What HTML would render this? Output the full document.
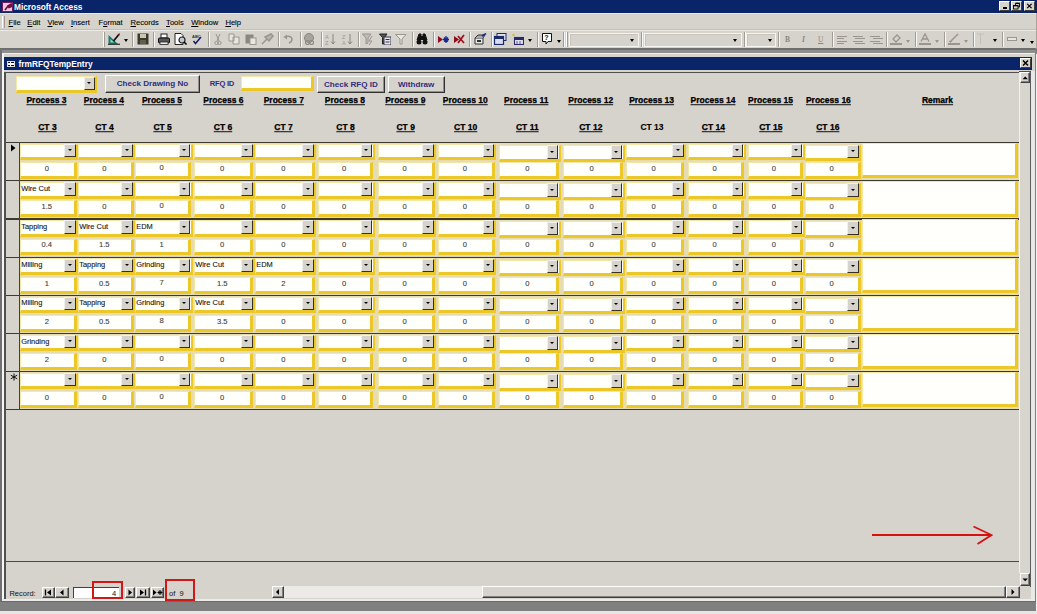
<!DOCTYPE html><html><head><meta charset="utf-8"><style>
*{margin:0;padding:0;box-sizing:border-box}
html,body{width:1037px;height:614px;overflow:hidden;background:#D6D3CD;position:relative;font-family:"Liberation Sans",sans-serif}
body div{position:absolute}
.t{white-space:nowrap;line-height:1}
.rg{-webkit-text-stroke:0.1px currentColor}
.btn{background:#D6D3CD;border-top:1px solid #fff;border-left:1px solid #fff;border-right:1px solid #404040;border-bottom:1px solid #404040;box-shadow:inset -1px -1px 0 #808080}
.sep{width:2px;border-left:1px solid #808080;border-right:1px solid #fff}
.hd{font-weight:bold;font-size:8.5px;color:#000;text-decoration:underline;text-decoration-color:#3a3a3a;text-shadow:0 1px 0 rgba(90,90,90,.35);-webkit-text-stroke:0.12px #000}
.cb{background:#fffffc;border-top:1px solid #f4e7a8;border-left:1px solid #f4e7a8;border-right:3px solid #EBC828;border-bottom:3.4px solid #EBC828}
.dd{background:#D6D3CD;border-top:1px solid #f0f0f0;border-left:1px solid #f0f0f0;border-right:1px solid #3a3020;border-bottom:1px solid #3a3020}
.ar{width:0;height:0;border-left:2.5px solid transparent;border-right:2.5px solid transparent;border-top:3px solid #000}
.ct{font-size:7.6px;color:#222}
</style></head><body>
<div style="left:0px;top:0px;width:1037px;height:13px;background:#0A246A"></div>
<div style="left:0px;top:13px;width:1037px;height:1px;background:#e8e8f0"></div>
<div style="left:2px;top:2px;width:11px;height:10px;background:#f4c8e0;border:1px solid #7a1a5a"></div>
<svg style="position:absolute;left:2px;top:2px" width="11" height="10"><path d="M3 8 L6 4 M6 4 L9 2 L9.5 4.5 L7 5.5 Z" stroke="#6a1040" stroke-width="1.6" fill="#8a2060"/></svg>
<div class="t" style="left:14px;top:2.6px;color:#fff;font-weight:bold;font-size:8.3px">Microsoft Access</div>
<div style="left:999px;top:1px;width:11px;height:10px;background:#D6D3CD;border-top:1px solid #fff;border-left:1px solid #fff;border-right:1px solid #404040;border-bottom:1px solid #404040"></div>
<div style="left:1011px;top:1px;width:11px;height:10px;background:#D6D3CD;border-top:1px solid #fff;border-left:1px solid #fff;border-right:1px solid #404040;border-bottom:1px solid #404040"></div>
<div style="left:1024px;top:1px;width:11px;height:10px;background:#D6D3CD;border-top:1px solid #fff;border-left:1px solid #fff;border-right:1px solid #404040;border-bottom:1px solid #404040"></div>
<div style="left:1002.5px;top:7.3px;width:4.5px;height:1.4px;background:#000"></div>
<svg style="position:absolute;left:1011px;top:1px" width="11" height="10"><path d="M4.5 4 V2.5 H8.5 V6 H7" fill="none" stroke="#000" stroke-width="0.9"/><path d="M4.5 2.2 H8.8" stroke="#000" stroke-width="1.2"/><rect x="2.5" y="4.5" width="4.5" height="3.5" fill="none" stroke="#000" stroke-width="0.9"/><path d="M2.2 4.7 H7.2" stroke="#000" stroke-width="1.3"/></svg>
<svg style="position:absolute;left:1024px;top:1px" width="11" height="10"><path d="M3.2 2.8 L7.6 7.2 M7.6 2.8 L3.2 7.2" stroke="#000" stroke-width="1.2"/></svg>
<div style="left:2px;top:15.5px;width:2.5px;height:12.5px;border-left:1px solid #fff;border-right:1.2px solid #a09c94"></div>
<div class="t rg" style="left:8.5px;top:18.6px;font-size:7.6px;color:#000"><u>F</u>ile</div>
<div class="t rg" style="left:27.3px;top:18.6px;font-size:7.6px;color:#000"><u>E</u>dit</div>
<div class="t rg" style="left:47.5px;top:18.6px;font-size:7.6px;color:#000"><u>V</u>iew</div>
<div class="t rg" style="left:70.9px;top:18.6px;font-size:7.6px;color:#000"><u>I</u>nsert</div>
<div class="t rg" style="left:98.5px;top:18.6px;font-size:7.6px;color:#000">F<u>o</u>rmat</div>
<div class="t rg" style="left:130.5px;top:18.6px;font-size:7.6px;color:#000"><u>R</u>ecords</div>
<div class="t rg" style="left:166.1px;top:18.6px;font-size:7.6px;color:#000"><u>T</u>ools</div>
<div class="t rg" style="left:191.2px;top:18.6px;font-size:7.6px;color:#000"><u>W</u>indow</div>
<div class="t rg" style="left:225.4px;top:18.6px;font-size:7.6px;color:#000"><u>H</u>elp</div>
<div style="left:0px;top:28.6px;width:1037px;height:1px;background:#c4c0b8"></div>
<div style="left:0px;top:29.6px;width:1037px;height:1px;background:#ecebe6"></div>
<div style="left:1035.5px;top:13px;width:1.5px;height:35px;background:#a8a49c"></div>
<div style="left:102.5px;top:31.5px;width:2.5px;height:15px;border-left:1px solid #fff;border-right:1.2px solid #a09c94"></div>
<div style="left:132px;top:31.5px;width:2px;height:15px;border-left:1px solid #a09c94;border-right:1px solid #f8f8f8"></div>
<div style="left:153px;top:31.5px;width:2px;height:15px;border-left:1px solid #a09c94;border-right:1px solid #f8f8f8"></div>
<div style="left:208px;top:31.5px;width:2px;height:15px;border-left:1px solid #a09c94;border-right:1px solid #f8f8f8"></div>
<div style="left:278px;top:31.5px;width:2px;height:15px;border-left:1px solid #a09c94;border-right:1px solid #f8f8f8"></div>
<div style="left:300px;top:31.5px;width:2px;height:15px;border-left:1px solid #a09c94;border-right:1px solid #f8f8f8"></div>
<div style="left:320.5px;top:31.5px;width:2px;height:15px;border-left:1px solid #a09c94;border-right:1px solid #f8f8f8"></div>
<div style="left:357.6px;top:31.5px;width:2px;height:15px;border-left:1px solid #a09c94;border-right:1px solid #f8f8f8"></div>
<div style="left:412px;top:31.5px;width:2px;height:15px;border-left:1px solid #a09c94;border-right:1px solid #f8f8f8"></div>
<div style="left:433px;top:31.5px;width:2px;height:15px;border-left:1px solid #a09c94;border-right:1px solid #f8f8f8"></div>
<div style="left:469.4px;top:31.5px;width:2px;height:15px;border-left:1px solid #a09c94;border-right:1px solid #f8f8f8"></div>
<div style="left:490.8px;top:31.5px;width:2px;height:15px;border-left:1px solid #a09c94;border-right:1px solid #f8f8f8"></div>
<div style="left:536.7px;top:31.5px;width:2px;height:15px;border-left:1px solid #a09c94;border-right:1px solid #f8f8f8"></div>
<div style="left:563px;top:31.5px;width:2px;height:15px;border-left:1px solid #a09c94;border-right:1px solid #f8f8f8"></div>
<div style="left:565.5px;top:31.5px;width:2.5px;height:15px;border-left:1px solid #fff;border-right:1.2px solid #a09c94"></div>
<div style="left:641px;top:31.5px;width:2px;height:15px;border-left:1px solid #a09c94;border-right:1px solid #f8f8f8"></div>
<div style="left:743.6px;top:31.5px;width:2px;height:15px;border-left:1px solid #a09c94;border-right:1px solid #f8f8f8"></div>
<div style="left:778px;top:31.5px;width:2px;height:15px;border-left:1px solid #a09c94;border-right:1px solid #f8f8f8"></div>
<div style="left:832px;top:31.5px;width:2px;height:15px;border-left:1px solid #a09c94;border-right:1px solid #f8f8f8"></div>
<div style="left:886px;top:31.5px;width:2px;height:15px;border-left:1px solid #a09c94;border-right:1px solid #f8f8f8"></div>
<div style="left:914.5px;top:31.5px;width:2px;height:15px;border-left:1px solid #a09c94;border-right:1px solid #f8f8f8"></div>
<div style="left:943.6px;top:31.5px;width:2px;height:15px;border-left:1px solid #a09c94;border-right:1px solid #f8f8f8"></div>
<div style="left:972.7px;top:31.5px;width:2px;height:15px;border-left:1px solid #a09c94;border-right:1px solid #f8f8f8"></div>
<div style="left:1001.7px;top:31.5px;width:2px;height:15px;border-left:1px solid #a09c94;border-right:1px solid #f8f8f8"></div>
<div style="left:569px;top:33px;width:70px;height:14px;border:1px solid #f6f4f0;box-shadow:inset 1px 1px 0 #c8c4bc"></div>
<div class="ar" style="left:629.5px;top:39px"></div>
<div style="left:644px;top:33px;width:98px;height:14px;border:1px solid #f6f4f0;box-shadow:inset 1px 1px 0 #c8c4bc"></div>
<div class="ar" style="left:732.5px;top:39px"></div>
<div style="left:746px;top:33px;width:30px;height:14px;border:1px solid #f6f4f0;box-shadow:inset 1px 1px 0 #c8c4bc"></div>
<div class="ar" style="left:767.5px;top:39px"></div>
<svg style="position:absolute;left:108px;top:33px" width="13" height="12" viewBox="0 0 13 12"><path d="M0.5 11 L0.5 2 L10 11 Z" fill="#1a7a6a"/><path d="M2.5 9.5 L2.5 6 L6 9.5Z" fill="#a8d0c0"/><path d="M0 11.3 H12" stroke="#303838" stroke-width="1.3"/><path d="M5.5 8 L10.5 2" stroke="#101010" stroke-width="1.8"/><path d="M9.5 1.5 L11.5 0 L11.8 2.5Z" fill="#5a1010"/></svg>
<div class="ar" style="left:124px;top:39px"></div>
<svg style="position:absolute;left:137px;top:33px" width="12" height="12" viewBox="0 0 12 12"><rect x="0.5" y="0.5" width="11" height="11" fill="#3a3a28"/><rect x="3" y="1" width="6" height="4" fill="#c8c8b0"/><rect x="3" y="7" width="6" height="4" fill="#606050"/></svg>
<svg style="position:absolute;left:158px;top:33px" width="12" height="12" viewBox="0 0 12 12"><rect x="3" y="1" width="6" height="4" fill="#fff" stroke="#222"/><rect x="0.5" y="5" width="11" height="5" rx="1" fill="#555" stroke="#111"/><rect x="2" y="9" width="8" height="2.5" fill="#eee" stroke="#222" stroke-width=".8"/></svg>
<svg style="position:absolute;left:174px;top:33px" width="13" height="12" viewBox="0 0 13 12"><path d="M1 0.5 H7 L9 2.5 V11.5 H1Z" fill="#fff" stroke="#222"/><circle cx="8" cy="7" r="3" fill="#c0c8d0" stroke="#222" stroke-width="1.2"/><path d="M10 9 L12.5 11.5" stroke="#111" stroke-width="1.6"/></svg>
<svg style="position:absolute;left:191px;top:33px" width="12" height="12" viewBox="0 0 12 12"><text x="1" y="4.5" font-size="4" font-family="Liberation Sans" font-weight="bold" fill="#1a3a1a">ABC</text><path d="M2.5 8 L4.5 10.5 L10 4" stroke="#1a1a6a" stroke-width="1.5" fill="none"/></svg>
<svg style="position:absolute;left:214px;top:33px" width="8" height="12" viewBox="0 0 8 12"><path d="M2 1 L5 8 M6 1 L3 8" stroke="#9a968e" stroke-width="1"/><circle cx="2.5" cy="10" r="1.6" fill="none" stroke="#9a968e"/><circle cx="5.5" cy="10" r="1.6" fill="none" stroke="#9a968e"/></svg>
<svg style="position:absolute;left:228px;top:33px" width="13" height="12" viewBox="0 0 13 12"><path d="M1 1 H6 V8 H1Z M5 4 H11 V11 H5Z" fill="#e8e6e0" stroke="#9a968e"/></svg>
<svg style="position:absolute;left:245px;top:33px" width="12" height="12" viewBox="0 0 12 12"><rect x="0.5" y="1.5" width="8" height="9" fill="#8a8680"/><rect x="5" y="5" width="6" height="6.5" fill="#e8e6e0" stroke="#9a968e"/></svg>
<svg style="position:absolute;left:261px;top:33px" width="13" height="12" viewBox="0 0 13 12"><path d="M1 11 L6 6 M4 4 L10 1 L12 3 L8 8Z" stroke="#9a968e" stroke-width="1.5" fill="#b8b4ac"/></svg>
<svg style="position:absolute;left:283px;top:33px" width="11" height="12" viewBox="0 0 11 12"><path d="M2 4 Q8 2 9 6 Q9 9 6 10" stroke="#9a968e" stroke-width="1.5" fill="none"/><path d="M0.5 4 L4 1.5 L4 6.5Z" fill="#9a968e"/></svg>
<svg style="position:absolute;left:303px;top:33px" width="13" height="12" viewBox="0 0 13 12"><circle cx="6" cy="5" r="4.5" fill="#a8a49c" stroke="#8a8680"/><circle cx="4.5" cy="9.5" r="2" fill="none" stroke="#8a8680" stroke-width="1.2"/><circle cx="8.5" cy="9.5" r="2" fill="none" stroke="#8a8680" stroke-width="1.2"/></svg>
<svg style="position:absolute;left:325px;top:33px" width="11" height="12" viewBox="0 0 11 12"><text x="0" y="5.5" font-size="5.5" font-family="Liberation Sans" fill="#9a968e">A</text><text x="0" y="11.5" font-size="5.5" font-family="Liberation Sans" fill="#9a968e">Z</text><path d="M8 1 V11 M6 8.5 L8 11 L10 8.5" stroke="#8a8680" stroke-width="1" fill="none"/></svg>
<svg style="position:absolute;left:342px;top:33px" width="11" height="12" viewBox="0 0 11 12"><text x="0" y="5.5" font-size="5.5" font-family="Liberation Sans" fill="#9a968e">Z</text><text x="0" y="11.5" font-size="5.5" font-family="Liberation Sans" fill="#9a968e">A</text><path d="M8 1 V11 M6 8.5 L8 11 L10 8.5" stroke="#8a8680" stroke-width="1" fill="none"/></svg>
<svg style="position:absolute;left:362px;top:33px" width="12" height="12" viewBox="0 0 12 12"><path d="M0.5 1 H9 L6 5 V10 L4 11 V5Z" fill="#c0bcb4" stroke="#9a968e"/><path d="M10 3 L7 8 L10 8 L7 12" stroke="#9a968e" fill="none"/></svg>
<svg style="position:absolute;left:379px;top:33px" width="12" height="12" viewBox="0 0 12 12"><path d="M0.5 1 H8 L5.5 4.5 V10 L3.5 11 V4.5Z" fill="#555" stroke="#222"/><rect x="5" y="4" width="7" height="8" fill="#e8e8e8" stroke="#303050"/><path d="M6.5 6.5 H10.5 M6.5 9 H10.5" stroke="#303050"/></svg>
<svg style="position:absolute;left:395px;top:33px" width="12" height="12" viewBox="0 0 12 12"><path d="M0.5 1.5 H11 L7 6 V11 L5 11 V6Z" fill="#e8e6e0" stroke="#9a968e"/></svg>
<svg style="position:absolute;left:416px;top:33px" width="12" height="12" viewBox="0 0 12 12"><path d="M1 7 L3 1 H5 V7 M11 7 L9 1 H7 V7" fill="#111" stroke="#111"/><circle cx="3" cy="9" r="2.5" fill="#111"/><circle cx="9" cy="9" r="2.5" fill="#111"/><rect x="5" y="3" width="2" height="4" fill="#111"/></svg>
<svg style="position:absolute;left:437px;top:33px" width="12" height="12" viewBox="0 0 12 12"><path d="M1 3 L6 6.5 L1 10Z" fill="#8a1020"/><path d="M9 3 V10 M6 6.5 H12 M7 4.5 L11 8.5 M11 4.5 L7 8.5" stroke="#1a2a8a" stroke-width="1.3"/></svg>
<svg style="position:absolute;left:453px;top:33px" width="12" height="12" viewBox="0 0 12 12"><path d="M1 3 L6 6.5 L1 10Z" fill="#8a1020"/><path d="M5 3 L11 10 M11 2 L5 10" stroke="#a01020" stroke-width="1.8"/></svg>
<svg style="position:absolute;left:474px;top:33px" width="13" height="12" viewBox="0 0 13 12"><path d="M1 5 H9 V11 H1Z" fill="#e8e8e8" stroke="#333"/><path d="M1 5 L4 2 H11 L9 5" fill="#aaa" stroke="#333"/><path d="M8 3 L12 0.5" stroke="#1a2a8a" stroke-width="1.5"/><rect x="3" y="7" width="4" height="2" fill="#333"/></svg>
<svg style="position:absolute;left:494px;top:33px" width="13" height="12" viewBox="0 0 13 12"><rect x="3" y="0.5" width="9" height="7" fill="#e0e4f0" stroke="#1a2a6a"/><rect x="0.5" y="3.5" width="9" height="8" fill="#d8dcec" stroke="#1a2a6a" stroke-width="1.2"/><rect x="1" y="4" width="8" height="2" fill="#1a2a6a"/></svg>
<svg style="position:absolute;left:511px;top:33px" width="13" height="12" viewBox="0 0 13 12"><path d="M2 1 L3 3 M1 2 H4" stroke="#d0c020"/><rect x="3.5" y="4.5" width="9" height="7" fill="#e0e0f0" stroke="#2a2a6a" stroke-width="1.1"/><rect x="4" y="5" width="8" height="2" fill="#2a2a6a"/><path d="M6 8 V11 M9 8 V11" stroke="#2a2a6a" stroke-width=".7"/></svg>
<div class="ar" style="left:527.5px;top:39px"></div>
<svg style="position:absolute;left:542px;top:33px" width="10" height="12" viewBox="0 0 10 12"><path d="M0.5 0.5 H9.5 V8.5 H6 L4 11 L4 8.5 H0.5Z" fill="#fff" stroke="#111"/><text x="2.3" y="7.3" font-size="7" font-weight="bold" font-family="Liberation Sans" fill="#111">?</text></svg>
<div class="ar" style="left:556.5px;top:40px"></div>
<div class="t" style="left:785px;top:35.5px;font-family:'Liberation Serif';font-weight:bold;font-size:7.5px;color:#8a8680">B</div>
<div class="t" style="left:802px;top:35.5px;font-family:'Liberation Serif';font-style:italic;font-weight:bold;font-size:7.5px;color:#8a8680">I</div>
<div class="t" style="left:818px;top:35.5px;font-family:'Liberation Serif';font-size:7.5px;color:#8a8680"><u>U</u></div>
<div style="left:837px;top:35.5px;width:10px;height:1px;background:#9a968e"></div>
<div style="left:837px;top:38px;width:7px;height:1px;background:#9a968e"></div>
<div style="left:837px;top:40.5px;width:10px;height:1px;background:#9a968e"></div>
<div style="left:837px;top:43px;width:7px;height:1px;background:#9a968e"></div>
<div style="left:853px;top:35.5px;width:10px;height:1px;background:#9a968e"></div>
<div style="left:854.5px;top:38px;width:10px;height:1px;background:#9a968e"></div>
<div style="left:853px;top:40.5px;width:10px;height:1px;background:#9a968e"></div>
<div style="left:854.5px;top:43px;width:10px;height:1px;background:#9a968e"></div>
<div style="left:870px;top:35.5px;width:10px;height:1px;background:#9a968e"></div>
<div style="left:873px;top:38px;width:10px;height:1px;background:#9a968e"></div>
<div style="left:870px;top:40.5px;width:10px;height:1px;background:#9a968e"></div>
<div style="left:873px;top:43px;width:10px;height:1px;background:#9a968e"></div>
<svg style="position:absolute;left:890px;top:33px" width="12" height="12" viewBox="0 0 12 12"><path d="M3 6 L7 2 L10 5 L6 9Z" fill="none" stroke="#9a968e" stroke-width="1.3"/><rect x="0" y="10" width="12" height="2" fill="#9a968e"/></svg>
<div class="ar" style="left:905.5px;top:40px;border-top-color:#9a968e"></div>
<svg style="position:absolute;left:919px;top:33px" width="12" height="12" viewBox="0 0 12 12"><path d="M2 8.5 L6 1 L10 8.5 M3.5 6 H8.5" stroke="#9a968e" stroke-width="1.3" fill="none"/><rect x="0" y="10" width="12" height="2" fill="#9a968e"/></svg>
<div class="ar" style="left:935px;top:40px;border-top-color:#9a968e"></div>
<svg style="position:absolute;left:948px;top:33px" width="12" height="12" viewBox="0 0 12 12"><path d="M2 9 L10 1" stroke="#9a968e" stroke-width="1.5"/><path d="M1 8 Q2 10 4 8" stroke="#9a968e" fill="none"/><rect x="0" y="10" width="12" height="2" fill="#9a968e"/></svg>
<div class="ar" style="left:963.5px;top:40px;border-top-color:#9a968e"></div>
<svg style="position:absolute;left:976px;top:33px" width="9" height="12" viewBox="0 0 9 12"><path d="M1 1 H8 M4.5 1 V11" stroke="#c4c0b8" stroke-width="1"/></svg>
<div class="ar" style="left:992.5px;top:39px"></div>
<div style="left:1007px;top:37px;width:10px;height:4px;border:1px solid #9a968e;background:#e8e6e0"></div>
<div class="ar" style="left:1021px;top:39px"></div>
<div class="ar" style="left:1029.5px;top:41px"></div>
<div style="left:0px;top:48px;width:1037px;height:2px;background:#6e6e6e"></div>
<div style="left:0px;top:50px;width:1037px;height:4px;background:#8e8e8e"></div>
<div style="left:0px;top:48px;width:2px;height:566px;background:#707070"></div>
<div style="left:1035px;top:48px;width:2px;height:566px;background:#808080"></div>
<div style="left:1036px;top:54px;width:1px;height:560px;background:#f0f0f0"></div>
<div style="left:0px;top:601px;width:1036px;height:10px;background:#808080"></div>
<div style="left:0px;top:601px;width:1036px;height:1.2px;background:#6a6a6a"></div>
<div style="left:0px;top:611px;width:1037px;height:3px;background:#e8e6e2"></div>
<div style="left:2px;top:53.2px;width:1033px;height:547.8px;background:#D6D3CD;border-top:1px solid #f0f0f0;border-left:1px solid #f0f0f0"></div>
<div style="left:4.3px;top:57px;width:1028px;height:13px;background:#0A246A"></div>
<div style="left:7px;top:60.5px;width:8px;height:6.5px;background:#fff;border:1px solid #dcdcdc"></div>
<div style="left:8px;top:62px;width:2px;height:1px;background:#111"></div>
<div style="left:11px;top:62px;width:3px;height:1px;background:#111"></div>
<div style="left:8px;top:64.5px;width:2px;height:1px;background:#111"></div>
<div style="left:11px;top:64.5px;width:3px;height:1px;background:#111"></div>
<div class="t" style="left:18.5px;top:59.6px;color:#fff;font-weight:bold;font-size:8.35px">frmRFQTempEntry</div>
<div style="left:1019.7px;top:57.7px;width:11px;height:10px;background:#D6D3CD;border-top:1px solid #fff;border-left:1px solid #fff;border-right:1px solid #404040;border-bottom:1px solid #404040"></div>
<svg style="position:absolute;left:1019.7px;top:57.7px" width="11" height="10"><path d="M3 2.5 L8 7.5 M8 2.5 L3 7.5" stroke="#000" stroke-width="1.5"/></svg>
<div style="left:4px;top:71.5px;width:1027.5px;height:528px;border-top:1px solid #505050;border-left:2px solid #505050;border-right:1px solid #6a6a6a"></div>
<div style="left:1031.3px;top:71px;width:3.4px;height:530px;background:#e8e8e6"></div>
<div style="left:1034.7px;top:54px;width:1.3px;height:547px;background:#808080"></div>
<div style="left:2.4px;top:54px;width:1.5px;height:547px;background:#f6f6f6"></div>
<div style="left:2px;top:598.5px;width:1033px;height:2px;background:#ecebe7"></div>
<div class="cb" style="left:16.3px;top:76.3px;width:81px;height:16.4px;border-right-width:2.3px"></div>
<div class="dd" style="left:84.0px;top:76.5px;width:11px;height:13.2px;"></div>
<div class="ar" style="left:87.1px;top:81.8px;border-left-width:2px;border-right-width:2px;border-top-width:2.5px"></div>
<div style="left:105px;top:75.3px;width:95px;height:17.3px;background:#D6D3CD;border-top:1px solid #fff;border-left:1px solid #fff;border-right:1.5px solid #303030;border-bottom:1.5px solid #303030;box-shadow:inset -1px -1px 0 #909090"></div>
<div class="t" style="left:105px;top:79.89999999999999px;width:95px;text-align:center;font-size:8.1px;font-weight:bold;color:#2e2e7c">Check Drawing No</div>
<div class="t" style="left:209.8px;top:80.3px;font-size:7.6px;letter-spacing:-0.25px;font-weight:bold;color:#2e2e7c">RFQ ID</div>
<div class="cb" style="left:241.4px;top:76.4px;width:72.5px;height:15px;"></div>
<div style="left:317.2px;top:76.3px;width:67.5px;height:17px;background:#D6D3CD;border-top:1px solid #fff;border-left:1px solid #fff;border-right:1.5px solid #303030;border-bottom:1.5px solid #303030;box-shadow:inset -1px -1px 0 #909090"></div>
<div class="t" style="left:317.2px;top:80.89999999999999px;width:67.5px;text-align:center;font-size:8.1px;font-weight:bold;color:#2e2e7c">Check RFQ ID</div>
<div style="left:387.6px;top:76.3px;width:57.2px;height:17px;background:#D6D3CD;border-top:1px solid #fff;border-left:1px solid #fff;border-right:1.5px solid #303030;border-bottom:1.5px solid #303030;box-shadow:inset -1px -1px 0 #909090"></div>
<div class="t" style="left:387.6px;top:80.89999999999999px;width:57.2px;text-align:center;font-size:8.1px;font-weight:bold;color:#2e2e7c">Withdraw</div>
<div class="t hd" style="left:-13.5px;top:96.4px;width:120px;text-align:center;">Process 3</div>
<div class="t hd" style="left:43.900000000000006px;top:96.4px;width:120px;text-align:center;">Process 4</div>
<div class="t hd" style="left:102px;top:96.4px;width:120px;text-align:center;">Process 5</div>
<div class="t hd" style="left:163.4px;top:96.4px;width:120px;text-align:center;">Process 6</div>
<div class="t hd" style="left:223.8px;top:96.4px;width:120px;text-align:center;">Process 7</div>
<div class="t hd" style="left:284.9px;top:96.4px;width:120px;text-align:center;">Process 8</div>
<div class="t hd" style="left:345.3px;top:96.4px;width:120px;text-align:center;">Process 9</div>
<div class="t hd" style="left:405.3px;top:96.4px;width:120px;text-align:center;">Process 10</div>
<div class="t hd" style="left:466.20000000000005px;top:96.4px;width:120px;text-align:center;">Process 11</div>
<div class="t hd" style="left:530.7px;top:96.4px;width:120px;text-align:center;">Process 12</div>
<div class="t hd" style="left:591.6px;top:96.4px;width:120px;text-align:center;">Process 13</div>
<div class="t hd" style="left:653px;top:96.4px;width:120px;text-align:center;">Process 14</div>
<div class="t hd" style="left:710.5px;top:95.6px;width:120px;text-align:center;">Process 15</div>
<div class="t hd" style="left:768.4px;top:96.4px;width:120px;text-align:center;">Process 16</div>
<div class="t hd" style="left:877.5px;top:96.4px;width:120px;text-align:center;">Remark</div>
<div class="t hd" style="left:-12.600000000000001px;top:123.3px;width:120px;text-align:center;">CT 3</div>
<div class="t hd" style="left:44.5px;top:123.3px;width:120px;text-align:center;">CT 4</div>
<div class="t hd" style="left:102.6px;top:123.3px;width:120px;text-align:center;">CT 5</div>
<div class="t hd" style="left:163px;top:123.3px;width:120px;text-align:center;">CT 6</div>
<div class="t hd" style="left:223.5px;top:123.3px;width:120px;text-align:center;">CT 7</div>
<div class="t hd" style="left:285.5px;top:123.3px;width:120px;text-align:center;">CT 8</div>
<div class="t hd" style="left:345.7px;top:123.3px;width:120px;text-align:center;">CT 9</div>
<div class="t hd" style="left:405.7px;top:123.3px;width:120px;text-align:center;">CT 10</div>
<div class="t hd" style="left:467.29999999999995px;top:123.3px;width:120px;text-align:center;">CT 11</div>
<div class="t hd" style="left:530.8px;top:123.3px;width:120px;text-align:center;">CT 12</div>
<div class="t" style="left:592px;top:123.3px;width:120px;text-align:center;font-weight:bold;font-size:8.5px;color:#000;-webkit-text-stroke:0.12px #000">CT 13</div>
<div class="t hd" style="left:653.4px;top:123.3px;width:120px;text-align:center;">CT 14</div>
<div class="t hd" style="left:710.8px;top:123.3px;width:120px;text-align:center;">CT 15</div>
<div class="t hd" style="left:767.8px;top:123.3px;width:120px;text-align:center;">CT 16</div>
<div style="left:6px;top:142.0px;width:1014px;height:1.2px;background:#3e3a30"></div>
<div style="left:20px;top:143.2px;width:999px;height:36.8px;background:#e6dcb4"></div>
<div class="cb" style="left:20px;top:143.8px;width:58px;height:16.6px;border-right-width:2.3px"></div>
<div class="dd" style="left:64.10000000000001px;top:144.0px;width:11.6px;height:13.400000000000002px;"></div>
<div class="ar" style="left:67.5px;top:149.40000000000003px;border-left-width:2px;border-right-width:2px;border-top-width:2.5px"></div>
<div class="cb" style="left:20px;top:162.2px;width:56.5px;height:16.8px;"></div>
<div class="t rg" style="left:20px;top:166.2px;width:53.5px;text-align:center;font-size:7.6px;color:#3c3c3c;top:165.0px">0</div>
<div class="cb" style="left:78px;top:143.8px;width:57px;height:16.6px;border-right-width:2.3px"></div>
<div class="dd" style="left:121.1px;top:144.0px;width:11.6px;height:13.400000000000002px;"></div>
<div class="ar" style="left:124.49999999999999px;top:149.40000000000003px;border-left-width:2px;border-right-width:2px;border-top-width:2.5px"></div>
<div class="cb" style="left:78px;top:162.2px;width:55.5px;height:16.8px;"></div>
<div class="t rg" style="left:78px;top:166.2px;width:52.5px;text-align:center;font-size:7.6px;color:#3c3c3c;top:165.0px">0</div>
<div class="cb" style="left:135px;top:143.8px;width:57.69999999999999px;height:16.6px;border-right-width:2.3px"></div>
<div class="dd" style="left:178.79999999999998px;top:144.0px;width:11.6px;height:13.400000000000002px;"></div>
<div class="ar" style="left:182.2px;top:149.40000000000003px;border-left-width:2px;border-right-width:2px;border-top-width:2.5px"></div>
<div class="cb" style="left:135px;top:162.2px;width:56.19999999999999px;height:16.8px;"></div>
<div class="t rg" style="left:135px;top:166.2px;width:53.19999999999999px;text-align:center;font-size:7.6px;color:#3c3c3c;top:164.2px">0</div>
<div class="cb" style="left:194px;top:143.8px;width:60.900000000000006px;height:16.6px;border-right-width:2.3px"></div>
<div class="dd" style="left:241.0px;top:144.0px;width:11.6px;height:13.400000000000002px;"></div>
<div class="ar" style="left:244.4px;top:149.40000000000003px;border-left-width:2px;border-right-width:2px;border-top-width:2.5px"></div>
<div class="cb" style="left:194px;top:162.2px;width:59.400000000000006px;height:16.8px;"></div>
<div class="t rg" style="left:194px;top:166.2px;width:56.400000000000006px;text-align:center;font-size:7.6px;color:#3c3c3c;top:165.0px">0</div>
<div class="cb" style="left:255px;top:143.8px;width:61.19999999999999px;height:16.6px;border-right-width:2.3px"></div>
<div class="dd" style="left:302.29999999999995px;top:144.0px;width:11.6px;height:13.400000000000002px;"></div>
<div class="ar" style="left:305.7px;top:149.40000000000003px;border-left-width:2px;border-right-width:2px;border-top-width:2.5px"></div>
<div class="cb" style="left:255px;top:162.2px;width:59.69999999999999px;height:16.8px;"></div>
<div class="t rg" style="left:255px;top:166.2px;width:56.69999999999999px;text-align:center;font-size:7.6px;color:#3c3c3c;top:165.0px">0</div>
<div class="cb" style="left:318px;top:143.8px;width:56.5px;height:16.6px;border-right-width:2.3px"></div>
<div class="dd" style="left:360.59999999999997px;top:144.0px;width:11.6px;height:13.400000000000002px;"></div>
<div class="ar" style="left:364.0px;top:149.40000000000003px;border-left-width:2px;border-right-width:2px;border-top-width:2.5px"></div>
<div class="cb" style="left:318px;top:162.2px;width:55.0px;height:16.8px;"></div>
<div class="t rg" style="left:318px;top:166.2px;width:52.0px;text-align:center;font-size:7.6px;color:#3c3c3c;top:165.0px">0</div>
<div class="cb" style="left:377.5px;top:143.8px;width:58.5px;height:16.6px;border-right-width:2.3px"></div>
<div class="dd" style="left:422.09999999999997px;top:144.0px;width:11.6px;height:13.400000000000002px;"></div>
<div class="ar" style="left:425.5px;top:149.40000000000003px;border-left-width:2px;border-right-width:2px;border-top-width:2.5px"></div>
<div class="cb" style="left:377.5px;top:162.2px;width:57.0px;height:16.8px;"></div>
<div class="t rg" style="left:377.5px;top:166.2px;width:54.0px;text-align:center;font-size:7.6px;color:#3c3c3c;top:165.0px">0</div>
<div class="cb" style="left:437.7px;top:143.8px;width:58.80000000000001px;height:16.6px;border-right-width:2.3px"></div>
<div class="dd" style="left:482.59999999999997px;top:144.0px;width:11.6px;height:13.400000000000002px;"></div>
<div class="ar" style="left:486.0px;top:149.40000000000003px;border-left-width:2px;border-right-width:2px;border-top-width:2.5px"></div>
<div class="cb" style="left:437.7px;top:162.2px;width:57.30000000000001px;height:16.8px;"></div>
<div class="t rg" style="left:437.7px;top:166.2px;width:54.30000000000001px;text-align:center;font-size:7.6px;color:#3c3c3c;top:165.0px">0</div>
<div class="cb" style="left:498.5px;top:145.10000000000002px;width:62.0px;height:16.6px;border-right-width:2.3px"></div>
<div class="dd" style="left:546.6px;top:145.3px;width:11.6px;height:13.400000000000002px;"></div>
<div class="ar" style="left:550.0px;top:150.70000000000005px;border-left-width:2px;border-right-width:2px;border-top-width:2.5px"></div>
<div class="cb" style="left:498.5px;top:162.2px;width:60.5px;height:16.8px;"></div>
<div class="t rg" style="left:498.5px;top:166.2px;width:57.5px;text-align:center;font-size:7.6px;color:#3c3c3c;top:165.0px">0</div>
<div class="cb" style="left:563px;top:145.10000000000002px;width:61.5px;height:16.6px;border-right-width:2.3px"></div>
<div class="dd" style="left:610.6px;top:145.3px;width:11.6px;height:13.400000000000002px;"></div>
<div class="ar" style="left:614.0px;top:150.70000000000005px;border-left-width:2px;border-right-width:2px;border-top-width:2.5px"></div>
<div class="cb" style="left:563px;top:162.2px;width:60.0px;height:16.8px;"></div>
<div class="t rg" style="left:563px;top:166.2px;width:57.0px;text-align:center;font-size:7.6px;color:#3c3c3c;top:165.0px">0</div>
<div class="cb" style="left:625.8px;top:143.8px;width:60.200000000000045px;height:16.6px;border-right-width:2.3px"></div>
<div class="dd" style="left:672.1px;top:144.0px;width:11.6px;height:13.400000000000002px;"></div>
<div class="ar" style="left:675.5px;top:149.40000000000003px;border-left-width:2px;border-right-width:2px;border-top-width:2.5px"></div>
<div class="cb" style="left:625.8px;top:162.2px;width:58.700000000000045px;height:16.8px;"></div>
<div class="t rg" style="left:625.8px;top:166.2px;width:55.700000000000045px;text-align:center;font-size:7.6px;color:#3c3c3c;top:165.0px">0</div>
<div class="cb" style="left:688px;top:143.8px;width:57.5px;height:16.6px;border-right-width:2.3px"></div>
<div class="dd" style="left:731.6px;top:144.0px;width:11.6px;height:13.400000000000002px;"></div>
<div class="ar" style="left:735.0px;top:149.40000000000003px;border-left-width:2px;border-right-width:2px;border-top-width:2.5px"></div>
<div class="cb" style="left:688px;top:162.2px;width:56.0px;height:16.8px;"></div>
<div class="t rg" style="left:688px;top:166.2px;width:53.0px;text-align:center;font-size:7.6px;color:#3c3c3c;top:165.0px">0</div>
<div class="cb" style="left:747.5px;top:143.8px;width:57.0px;height:16.6px;border-right-width:2.3px"></div>
<div class="dd" style="left:790.6px;top:144.0px;width:11.6px;height:13.400000000000002px;"></div>
<div class="ar" style="left:794.0px;top:149.40000000000003px;border-left-width:2px;border-right-width:2px;border-top-width:2.5px"></div>
<div class="cb" style="left:747.5px;top:162.2px;width:55.5px;height:16.8px;"></div>
<div class="t rg" style="left:747.5px;top:166.2px;width:52.5px;text-align:center;font-size:7.6px;color:#3c3c3c;top:165.0px">0</div>
<div class="cb" style="left:805.3px;top:144.8px;width:55.700000000000045px;height:16.6px;border-right-width:2.3px"></div>
<div class="dd" style="left:847.1px;top:145.0px;width:11.6px;height:13.400000000000002px;"></div>
<div class="ar" style="left:850.5px;top:150.40000000000003px;border-left-width:2px;border-right-width:2px;border-top-width:2.5px"></div>
<div class="cb" style="left:805.3px;top:162.2px;width:55.700000000000045px;height:16.8px;"></div>
<div class="t rg" style="left:805.3px;top:166.2px;width:52.700000000000045px;text-align:center;font-size:7.6px;color:#3c3c3c;top:165.0px">0</div>
<div class="cb" style="left:861.8px;top:143.1px;width:156.2px;height:35.3px;"></div>
<div style="left:6px;top:180.18px;width:1014px;height:1.2px;background:#3e3a30"></div>
<div style="left:20px;top:181.38px;width:999px;height:36.8px;background:#e6dcb4"></div>
<div class="cb" style="left:20px;top:181.98000000000002px;width:58px;height:16.6px;border-right-width:2.3px"></div>
<div class="dd" style="left:64.10000000000001px;top:182.18px;width:11.6px;height:13.400000000000002px;"></div>
<div class="ar" style="left:67.5px;top:187.58000000000004px;border-left-width:2px;border-right-width:2px;border-top-width:2.5px"></div>
<div class="t rg" style="left:21.2px;top:184.88000000000002px;font-size:7.45px;color:#111;">Wire Cut</div>
<div class="cb" style="left:20px;top:200.38px;width:56.5px;height:16.8px;"></div>
<div class="t rg" style="left:20px;top:204.38px;width:53.5px;text-align:center;font-size:7.6px;color:#3c3c3c;top:203.18px">1.5</div>
<div class="cb" style="left:78px;top:181.98000000000002px;width:57px;height:16.6px;border-right-width:2.3px"></div>
<div class="dd" style="left:121.1px;top:182.18px;width:11.6px;height:13.400000000000002px;"></div>
<div class="ar" style="left:124.49999999999999px;top:187.58000000000004px;border-left-width:2px;border-right-width:2px;border-top-width:2.5px"></div>
<div class="cb" style="left:78px;top:200.38px;width:55.5px;height:16.8px;"></div>
<div class="t rg" style="left:78px;top:204.38px;width:52.5px;text-align:center;font-size:7.6px;color:#3c3c3c;top:203.18px">0</div>
<div class="cb" style="left:135px;top:181.98000000000002px;width:57.69999999999999px;height:16.6px;border-right-width:2.3px"></div>
<div class="dd" style="left:178.79999999999998px;top:182.18px;width:11.6px;height:13.400000000000002px;"></div>
<div class="ar" style="left:182.2px;top:187.58000000000004px;border-left-width:2px;border-right-width:2px;border-top-width:2.5px"></div>
<div class="cb" style="left:135px;top:200.38px;width:56.19999999999999px;height:16.8px;"></div>
<div class="t rg" style="left:135px;top:204.38px;width:53.19999999999999px;text-align:center;font-size:7.6px;color:#3c3c3c;top:202.38px">0</div>
<div class="cb" style="left:194px;top:181.98000000000002px;width:60.900000000000006px;height:16.6px;border-right-width:2.3px"></div>
<div class="dd" style="left:241.0px;top:182.18px;width:11.6px;height:13.400000000000002px;"></div>
<div class="ar" style="left:244.4px;top:187.58000000000004px;border-left-width:2px;border-right-width:2px;border-top-width:2.5px"></div>
<div class="cb" style="left:194px;top:200.38px;width:59.400000000000006px;height:16.8px;"></div>
<div class="t rg" style="left:194px;top:204.38px;width:56.400000000000006px;text-align:center;font-size:7.6px;color:#3c3c3c;top:203.18px">0</div>
<div class="cb" style="left:255px;top:181.98000000000002px;width:61.19999999999999px;height:16.6px;border-right-width:2.3px"></div>
<div class="dd" style="left:302.29999999999995px;top:182.18px;width:11.6px;height:13.400000000000002px;"></div>
<div class="ar" style="left:305.7px;top:187.58000000000004px;border-left-width:2px;border-right-width:2px;border-top-width:2.5px"></div>
<div class="cb" style="left:255px;top:200.38px;width:59.69999999999999px;height:16.8px;"></div>
<div class="t rg" style="left:255px;top:204.38px;width:56.69999999999999px;text-align:center;font-size:7.6px;color:#3c3c3c;top:203.18px">0</div>
<div class="cb" style="left:318px;top:181.98000000000002px;width:56.5px;height:16.6px;border-right-width:2.3px"></div>
<div class="dd" style="left:360.59999999999997px;top:182.18px;width:11.6px;height:13.400000000000002px;"></div>
<div class="ar" style="left:364.0px;top:187.58000000000004px;border-left-width:2px;border-right-width:2px;border-top-width:2.5px"></div>
<div class="cb" style="left:318px;top:200.38px;width:55.0px;height:16.8px;"></div>
<div class="t rg" style="left:318px;top:204.38px;width:52.0px;text-align:center;font-size:7.6px;color:#3c3c3c;top:203.18px">0</div>
<div class="cb" style="left:377.5px;top:181.98000000000002px;width:58.5px;height:16.6px;border-right-width:2.3px"></div>
<div class="dd" style="left:422.09999999999997px;top:182.18px;width:11.6px;height:13.400000000000002px;"></div>
<div class="ar" style="left:425.5px;top:187.58000000000004px;border-left-width:2px;border-right-width:2px;border-top-width:2.5px"></div>
<div class="cb" style="left:377.5px;top:200.38px;width:57.0px;height:16.8px;"></div>
<div class="t rg" style="left:377.5px;top:204.38px;width:54.0px;text-align:center;font-size:7.6px;color:#3c3c3c;top:203.18px">0</div>
<div class="cb" style="left:437.7px;top:181.98000000000002px;width:58.80000000000001px;height:16.6px;border-right-width:2.3px"></div>
<div class="dd" style="left:482.59999999999997px;top:182.18px;width:11.6px;height:13.400000000000002px;"></div>
<div class="ar" style="left:486.0px;top:187.58000000000004px;border-left-width:2px;border-right-width:2px;border-top-width:2.5px"></div>
<div class="cb" style="left:437.7px;top:200.38px;width:57.30000000000001px;height:16.8px;"></div>
<div class="t rg" style="left:437.7px;top:204.38px;width:54.30000000000001px;text-align:center;font-size:7.6px;color:#3c3c3c;top:203.18px">0</div>
<div class="cb" style="left:498.5px;top:183.28000000000003px;width:62.0px;height:16.6px;border-right-width:2.3px"></div>
<div class="dd" style="left:546.6px;top:183.48000000000002px;width:11.6px;height:13.400000000000002px;"></div>
<div class="ar" style="left:550.0px;top:188.88000000000005px;border-left-width:2px;border-right-width:2px;border-top-width:2.5px"></div>
<div class="cb" style="left:498.5px;top:200.38px;width:60.5px;height:16.8px;"></div>
<div class="t rg" style="left:498.5px;top:204.38px;width:57.5px;text-align:center;font-size:7.6px;color:#3c3c3c;top:203.18px">0</div>
<div class="cb" style="left:563px;top:183.28000000000003px;width:61.5px;height:16.6px;border-right-width:2.3px"></div>
<div class="dd" style="left:610.6px;top:183.48000000000002px;width:11.6px;height:13.400000000000002px;"></div>
<div class="ar" style="left:614.0px;top:188.88000000000005px;border-left-width:2px;border-right-width:2px;border-top-width:2.5px"></div>
<div class="cb" style="left:563px;top:200.38px;width:60.0px;height:16.8px;"></div>
<div class="t rg" style="left:563px;top:204.38px;width:57.0px;text-align:center;font-size:7.6px;color:#3c3c3c;top:203.18px">0</div>
<div class="cb" style="left:625.8px;top:181.98000000000002px;width:60.200000000000045px;height:16.6px;border-right-width:2.3px"></div>
<div class="dd" style="left:672.1px;top:182.18px;width:11.6px;height:13.400000000000002px;"></div>
<div class="ar" style="left:675.5px;top:187.58000000000004px;border-left-width:2px;border-right-width:2px;border-top-width:2.5px"></div>
<div class="cb" style="left:625.8px;top:200.38px;width:58.700000000000045px;height:16.8px;"></div>
<div class="t rg" style="left:625.8px;top:204.38px;width:55.700000000000045px;text-align:center;font-size:7.6px;color:#3c3c3c;top:203.18px">0</div>
<div class="cb" style="left:688px;top:181.98000000000002px;width:57.5px;height:16.6px;border-right-width:2.3px"></div>
<div class="dd" style="left:731.6px;top:182.18px;width:11.6px;height:13.400000000000002px;"></div>
<div class="ar" style="left:735.0px;top:187.58000000000004px;border-left-width:2px;border-right-width:2px;border-top-width:2.5px"></div>
<div class="cb" style="left:688px;top:200.38px;width:56.0px;height:16.8px;"></div>
<div class="t rg" style="left:688px;top:204.38px;width:53.0px;text-align:center;font-size:7.6px;color:#3c3c3c;top:203.18px">0</div>
<div class="cb" style="left:747.5px;top:181.98000000000002px;width:57.0px;height:16.6px;border-right-width:2.3px"></div>
<div class="dd" style="left:790.6px;top:182.18px;width:11.6px;height:13.400000000000002px;"></div>
<div class="ar" style="left:794.0px;top:187.58000000000004px;border-left-width:2px;border-right-width:2px;border-top-width:2.5px"></div>
<div class="cb" style="left:747.5px;top:200.38px;width:55.5px;height:16.8px;"></div>
<div class="t rg" style="left:747.5px;top:204.38px;width:52.5px;text-align:center;font-size:7.6px;color:#3c3c3c;top:203.18px">0</div>
<div class="cb" style="left:805.3px;top:182.98000000000002px;width:55.700000000000045px;height:16.6px;border-right-width:2.3px"></div>
<div class="dd" style="left:847.1px;top:183.18px;width:11.6px;height:13.400000000000002px;"></div>
<div class="ar" style="left:850.5px;top:188.58000000000004px;border-left-width:2px;border-right-width:2px;border-top-width:2.5px"></div>
<div class="cb" style="left:805.3px;top:200.38px;width:55.700000000000045px;height:16.8px;"></div>
<div class="t rg" style="left:805.3px;top:204.38px;width:52.700000000000045px;text-align:center;font-size:7.6px;color:#3c3c3c;top:203.18px">0</div>
<div class="cb" style="left:861.8px;top:181.28px;width:156.2px;height:35.3px;"></div>
<div style="left:6px;top:218.36px;width:1014px;height:1.2px;background:#3e3a30"></div>
<div style="left:20px;top:219.56px;width:999px;height:36.8px;background:#e6dcb4"></div>
<div class="cb" style="left:20px;top:220.16000000000003px;width:58px;height:16.6px;border-right-width:2.3px"></div>
<div class="dd" style="left:64.10000000000001px;top:220.36px;width:11.6px;height:13.400000000000002px;"></div>
<div class="ar" style="left:67.5px;top:225.76000000000005px;border-left-width:2px;border-right-width:2px;border-top-width:2.5px"></div>
<div class="t rg" style="left:21.2px;top:223.06000000000003px;font-size:7.45px;color:#111;">Tapping</div>
<div class="cb" style="left:20px;top:238.56px;width:56.5px;height:16.8px;"></div>
<div class="t rg" style="left:20px;top:242.56px;width:53.5px;text-align:center;font-size:7.6px;color:#3c3c3c;top:241.36px">0.4</div>
<div class="cb" style="left:78px;top:220.16000000000003px;width:57px;height:16.6px;border-right-width:2.3px"></div>
<div class="dd" style="left:121.1px;top:220.36px;width:11.6px;height:13.400000000000002px;"></div>
<div class="ar" style="left:124.49999999999999px;top:225.76000000000005px;border-left-width:2px;border-right-width:2px;border-top-width:2.5px"></div>
<div class="t rg" style="left:79.2px;top:223.06000000000003px;font-size:7.45px;color:#111;">Wire Cut</div>
<div class="cb" style="left:78px;top:238.56px;width:55.5px;height:16.8px;"></div>
<div class="t rg" style="left:78px;top:242.56px;width:52.5px;text-align:center;font-size:7.6px;color:#3c3c3c;top:241.36px">1.5</div>
<div class="cb" style="left:135px;top:220.16000000000003px;width:57.69999999999999px;height:16.6px;border-right-width:2.3px"></div>
<div class="dd" style="left:178.79999999999998px;top:220.36px;width:11.6px;height:13.400000000000002px;"></div>
<div class="ar" style="left:182.2px;top:225.76000000000005px;border-left-width:2px;border-right-width:2px;border-top-width:2.5px"></div>
<div class="t rg" style="left:136.2px;top:223.06000000000003px;font-size:7.45px;color:#111;">EDM</div>
<div class="cb" style="left:135px;top:238.56px;width:56.19999999999999px;height:16.8px;"></div>
<div class="t rg" style="left:135px;top:242.56px;width:53.19999999999999px;text-align:center;font-size:7.6px;color:#3c3c3c;top:240.56px">1</div>
<div class="cb" style="left:194px;top:220.16000000000003px;width:60.900000000000006px;height:16.6px;border-right-width:2.3px"></div>
<div class="dd" style="left:241.0px;top:220.36px;width:11.6px;height:13.400000000000002px;"></div>
<div class="ar" style="left:244.4px;top:225.76000000000005px;border-left-width:2px;border-right-width:2px;border-top-width:2.5px"></div>
<div class="cb" style="left:194px;top:238.56px;width:59.400000000000006px;height:16.8px;"></div>
<div class="t rg" style="left:194px;top:242.56px;width:56.400000000000006px;text-align:center;font-size:7.6px;color:#3c3c3c;top:241.36px">0</div>
<div class="cb" style="left:255px;top:220.16000000000003px;width:61.19999999999999px;height:16.6px;border-right-width:2.3px"></div>
<div class="dd" style="left:302.29999999999995px;top:220.36px;width:11.6px;height:13.400000000000002px;"></div>
<div class="ar" style="left:305.7px;top:225.76000000000005px;border-left-width:2px;border-right-width:2px;border-top-width:2.5px"></div>
<div class="cb" style="left:255px;top:238.56px;width:59.69999999999999px;height:16.8px;"></div>
<div class="t rg" style="left:255px;top:242.56px;width:56.69999999999999px;text-align:center;font-size:7.6px;color:#3c3c3c;top:241.36px">0</div>
<div class="cb" style="left:318px;top:220.16000000000003px;width:56.5px;height:16.6px;border-right-width:2.3px"></div>
<div class="dd" style="left:360.59999999999997px;top:220.36px;width:11.6px;height:13.400000000000002px;"></div>
<div class="ar" style="left:364.0px;top:225.76000000000005px;border-left-width:2px;border-right-width:2px;border-top-width:2.5px"></div>
<div class="cb" style="left:318px;top:238.56px;width:55.0px;height:16.8px;"></div>
<div class="t rg" style="left:318px;top:242.56px;width:52.0px;text-align:center;font-size:7.6px;color:#3c3c3c;top:241.36px">0</div>
<div class="cb" style="left:377.5px;top:220.16000000000003px;width:58.5px;height:16.6px;border-right-width:2.3px"></div>
<div class="dd" style="left:422.09999999999997px;top:220.36px;width:11.6px;height:13.400000000000002px;"></div>
<div class="ar" style="left:425.5px;top:225.76000000000005px;border-left-width:2px;border-right-width:2px;border-top-width:2.5px"></div>
<div class="cb" style="left:377.5px;top:238.56px;width:57.0px;height:16.8px;"></div>
<div class="t rg" style="left:377.5px;top:242.56px;width:54.0px;text-align:center;font-size:7.6px;color:#3c3c3c;top:241.36px">0</div>
<div class="cb" style="left:437.7px;top:220.16000000000003px;width:58.80000000000001px;height:16.6px;border-right-width:2.3px"></div>
<div class="dd" style="left:482.59999999999997px;top:220.36px;width:11.6px;height:13.400000000000002px;"></div>
<div class="ar" style="left:486.0px;top:225.76000000000005px;border-left-width:2px;border-right-width:2px;border-top-width:2.5px"></div>
<div class="cb" style="left:437.7px;top:238.56px;width:57.30000000000001px;height:16.8px;"></div>
<div class="t rg" style="left:437.7px;top:242.56px;width:54.30000000000001px;text-align:center;font-size:7.6px;color:#3c3c3c;top:241.36px">0</div>
<div class="cb" style="left:498.5px;top:221.46000000000004px;width:62.0px;height:16.6px;border-right-width:2.3px"></div>
<div class="dd" style="left:546.6px;top:221.66000000000003px;width:11.6px;height:13.400000000000002px;"></div>
<div class="ar" style="left:550.0px;top:227.06000000000006px;border-left-width:2px;border-right-width:2px;border-top-width:2.5px"></div>
<div class="cb" style="left:498.5px;top:238.56px;width:60.5px;height:16.8px;"></div>
<div class="t rg" style="left:498.5px;top:242.56px;width:57.5px;text-align:center;font-size:7.6px;color:#3c3c3c;top:241.36px">0</div>
<div class="cb" style="left:563px;top:221.46000000000004px;width:61.5px;height:16.6px;border-right-width:2.3px"></div>
<div class="dd" style="left:610.6px;top:221.66000000000003px;width:11.6px;height:13.400000000000002px;"></div>
<div class="ar" style="left:614.0px;top:227.06000000000006px;border-left-width:2px;border-right-width:2px;border-top-width:2.5px"></div>
<div class="cb" style="left:563px;top:238.56px;width:60.0px;height:16.8px;"></div>
<div class="t rg" style="left:563px;top:242.56px;width:57.0px;text-align:center;font-size:7.6px;color:#3c3c3c;top:241.36px">0</div>
<div class="cb" style="left:625.8px;top:220.16000000000003px;width:60.200000000000045px;height:16.6px;border-right-width:2.3px"></div>
<div class="dd" style="left:672.1px;top:220.36px;width:11.6px;height:13.400000000000002px;"></div>
<div class="ar" style="left:675.5px;top:225.76000000000005px;border-left-width:2px;border-right-width:2px;border-top-width:2.5px"></div>
<div class="cb" style="left:625.8px;top:238.56px;width:58.700000000000045px;height:16.8px;"></div>
<div class="t rg" style="left:625.8px;top:242.56px;width:55.700000000000045px;text-align:center;font-size:7.6px;color:#3c3c3c;top:241.36px">0</div>
<div class="cb" style="left:688px;top:220.16000000000003px;width:57.5px;height:16.6px;border-right-width:2.3px"></div>
<div class="dd" style="left:731.6px;top:220.36px;width:11.6px;height:13.400000000000002px;"></div>
<div class="ar" style="left:735.0px;top:225.76000000000005px;border-left-width:2px;border-right-width:2px;border-top-width:2.5px"></div>
<div class="cb" style="left:688px;top:238.56px;width:56.0px;height:16.8px;"></div>
<div class="t rg" style="left:688px;top:242.56px;width:53.0px;text-align:center;font-size:7.6px;color:#3c3c3c;top:241.36px">0</div>
<div class="cb" style="left:747.5px;top:220.16000000000003px;width:57.0px;height:16.6px;border-right-width:2.3px"></div>
<div class="dd" style="left:790.6px;top:220.36px;width:11.6px;height:13.400000000000002px;"></div>
<div class="ar" style="left:794.0px;top:225.76000000000005px;border-left-width:2px;border-right-width:2px;border-top-width:2.5px"></div>
<div class="cb" style="left:747.5px;top:238.56px;width:55.5px;height:16.8px;"></div>
<div class="t rg" style="left:747.5px;top:242.56px;width:52.5px;text-align:center;font-size:7.6px;color:#3c3c3c;top:241.36px">0</div>
<div class="cb" style="left:805.3px;top:221.16000000000003px;width:55.700000000000045px;height:16.6px;border-right-width:2.3px"></div>
<div class="dd" style="left:847.1px;top:221.36px;width:11.6px;height:13.400000000000002px;"></div>
<div class="ar" style="left:850.5px;top:226.76000000000005px;border-left-width:2px;border-right-width:2px;border-top-width:2.5px"></div>
<div class="cb" style="left:805.3px;top:238.56px;width:55.700000000000045px;height:16.8px;"></div>
<div class="t rg" style="left:805.3px;top:242.56px;width:52.700000000000045px;text-align:center;font-size:7.6px;color:#3c3c3c;top:241.36px">0</div>
<div class="cb" style="left:861.8px;top:219.46px;width:156.2px;height:35.3px;"></div>
<div style="left:6px;top:256.53999999999996px;width:1014px;height:1.2px;background:#3e3a30"></div>
<div style="left:20px;top:257.73999999999995px;width:999px;height:36.8px;background:#e6dcb4"></div>
<div class="cb" style="left:20px;top:258.34px;width:58px;height:16.6px;border-right-width:2.3px"></div>
<div class="dd" style="left:64.10000000000001px;top:258.53999999999996px;width:11.6px;height:13.400000000000002px;"></div>
<div class="ar" style="left:67.5px;top:263.94px;border-left-width:2px;border-right-width:2px;border-top-width:2.5px"></div>
<div class="t rg" style="left:21.2px;top:261.23999999999995px;font-size:7.45px;color:#111;">Milling</div>
<div class="cb" style="left:20px;top:276.73999999999995px;width:56.5px;height:16.8px;"></div>
<div class="t rg" style="left:20px;top:280.73999999999995px;width:53.5px;text-align:center;font-size:7.6px;color:#3c3c3c;top:279.53999999999996px">1</div>
<div class="cb" style="left:78px;top:258.34px;width:57px;height:16.6px;border-right-width:2.3px"></div>
<div class="dd" style="left:121.1px;top:258.53999999999996px;width:11.6px;height:13.400000000000002px;"></div>
<div class="ar" style="left:124.49999999999999px;top:263.94px;border-left-width:2px;border-right-width:2px;border-top-width:2.5px"></div>
<div class="t rg" style="left:79.2px;top:261.23999999999995px;font-size:7.45px;color:#111;">Tapping</div>
<div class="cb" style="left:78px;top:276.73999999999995px;width:55.5px;height:16.8px;"></div>
<div class="t rg" style="left:78px;top:280.73999999999995px;width:52.5px;text-align:center;font-size:7.6px;color:#3c3c3c;top:279.53999999999996px">0.5</div>
<div class="cb" style="left:135px;top:258.34px;width:57.69999999999999px;height:16.6px;border-right-width:2.3px"></div>
<div class="dd" style="left:178.79999999999998px;top:258.53999999999996px;width:11.6px;height:13.400000000000002px;"></div>
<div class="ar" style="left:182.2px;top:263.94px;border-left-width:2px;border-right-width:2px;border-top-width:2.5px"></div>
<div class="t rg" style="left:136.2px;top:261.23999999999995px;font-size:7.45px;color:#111;">Grinding</div>
<div class="cb" style="left:135px;top:276.73999999999995px;width:56.19999999999999px;height:16.8px;"></div>
<div class="t rg" style="left:135px;top:280.73999999999995px;width:53.19999999999999px;text-align:center;font-size:7.6px;color:#3c3c3c;top:278.73999999999995px">7</div>
<div class="cb" style="left:194px;top:258.34px;width:60.900000000000006px;height:16.6px;border-right-width:2.3px"></div>
<div class="dd" style="left:241.0px;top:258.53999999999996px;width:11.6px;height:13.400000000000002px;"></div>
<div class="ar" style="left:244.4px;top:263.94px;border-left-width:2px;border-right-width:2px;border-top-width:2.5px"></div>
<div class="t rg" style="left:195.2px;top:261.23999999999995px;font-size:7.45px;color:#111;">Wire Cut</div>
<div class="cb" style="left:194px;top:276.73999999999995px;width:59.400000000000006px;height:16.8px;"></div>
<div class="t rg" style="left:194px;top:280.73999999999995px;width:56.400000000000006px;text-align:center;font-size:7.6px;color:#3c3c3c;top:279.53999999999996px">1.5</div>
<div class="cb" style="left:255px;top:258.34px;width:61.19999999999999px;height:16.6px;border-right-width:2.3px"></div>
<div class="dd" style="left:302.29999999999995px;top:258.53999999999996px;width:11.6px;height:13.400000000000002px;"></div>
<div class="ar" style="left:305.7px;top:263.94px;border-left-width:2px;border-right-width:2px;border-top-width:2.5px"></div>
<div class="t rg" style="left:256.2px;top:261.23999999999995px;font-size:7.45px;color:#111;">EDM</div>
<div class="cb" style="left:255px;top:276.73999999999995px;width:59.69999999999999px;height:16.8px;"></div>
<div class="t rg" style="left:255px;top:280.73999999999995px;width:56.69999999999999px;text-align:center;font-size:7.6px;color:#3c3c3c;top:279.53999999999996px">2</div>
<div class="cb" style="left:318px;top:258.34px;width:56.5px;height:16.6px;border-right-width:2.3px"></div>
<div class="dd" style="left:360.59999999999997px;top:258.53999999999996px;width:11.6px;height:13.400000000000002px;"></div>
<div class="ar" style="left:364.0px;top:263.94px;border-left-width:2px;border-right-width:2px;border-top-width:2.5px"></div>
<div class="cb" style="left:318px;top:276.73999999999995px;width:55.0px;height:16.8px;"></div>
<div class="t rg" style="left:318px;top:280.73999999999995px;width:52.0px;text-align:center;font-size:7.6px;color:#3c3c3c;top:279.53999999999996px">0</div>
<div class="cb" style="left:377.5px;top:258.34px;width:58.5px;height:16.6px;border-right-width:2.3px"></div>
<div class="dd" style="left:422.09999999999997px;top:258.53999999999996px;width:11.6px;height:13.400000000000002px;"></div>
<div class="ar" style="left:425.5px;top:263.94px;border-left-width:2px;border-right-width:2px;border-top-width:2.5px"></div>
<div class="cb" style="left:377.5px;top:276.73999999999995px;width:57.0px;height:16.8px;"></div>
<div class="t rg" style="left:377.5px;top:280.73999999999995px;width:54.0px;text-align:center;font-size:7.6px;color:#3c3c3c;top:279.53999999999996px">0</div>
<div class="cb" style="left:437.7px;top:258.34px;width:58.80000000000001px;height:16.6px;border-right-width:2.3px"></div>
<div class="dd" style="left:482.59999999999997px;top:258.53999999999996px;width:11.6px;height:13.400000000000002px;"></div>
<div class="ar" style="left:486.0px;top:263.94px;border-left-width:2px;border-right-width:2px;border-top-width:2.5px"></div>
<div class="cb" style="left:437.7px;top:276.73999999999995px;width:57.30000000000001px;height:16.8px;"></div>
<div class="t rg" style="left:437.7px;top:280.73999999999995px;width:54.30000000000001px;text-align:center;font-size:7.6px;color:#3c3c3c;top:279.53999999999996px">0</div>
<div class="cb" style="left:498.5px;top:259.64px;width:62.0px;height:16.6px;border-right-width:2.3px"></div>
<div class="dd" style="left:546.6px;top:259.84px;width:11.6px;height:13.400000000000002px;"></div>
<div class="ar" style="left:550.0px;top:265.24px;border-left-width:2px;border-right-width:2px;border-top-width:2.5px"></div>
<div class="cb" style="left:498.5px;top:276.73999999999995px;width:60.5px;height:16.8px;"></div>
<div class="t rg" style="left:498.5px;top:280.73999999999995px;width:57.5px;text-align:center;font-size:7.6px;color:#3c3c3c;top:279.53999999999996px">0</div>
<div class="cb" style="left:563px;top:259.64px;width:61.5px;height:16.6px;border-right-width:2.3px"></div>
<div class="dd" style="left:610.6px;top:259.84px;width:11.6px;height:13.400000000000002px;"></div>
<div class="ar" style="left:614.0px;top:265.24px;border-left-width:2px;border-right-width:2px;border-top-width:2.5px"></div>
<div class="cb" style="left:563px;top:276.73999999999995px;width:60.0px;height:16.8px;"></div>
<div class="t rg" style="left:563px;top:280.73999999999995px;width:57.0px;text-align:center;font-size:7.6px;color:#3c3c3c;top:279.53999999999996px">0</div>
<div class="cb" style="left:625.8px;top:258.34px;width:60.200000000000045px;height:16.6px;border-right-width:2.3px"></div>
<div class="dd" style="left:672.1px;top:258.53999999999996px;width:11.6px;height:13.400000000000002px;"></div>
<div class="ar" style="left:675.5px;top:263.94px;border-left-width:2px;border-right-width:2px;border-top-width:2.5px"></div>
<div class="cb" style="left:625.8px;top:276.73999999999995px;width:58.700000000000045px;height:16.8px;"></div>
<div class="t rg" style="left:625.8px;top:280.73999999999995px;width:55.700000000000045px;text-align:center;font-size:7.6px;color:#3c3c3c;top:279.53999999999996px">0</div>
<div class="cb" style="left:688px;top:258.34px;width:57.5px;height:16.6px;border-right-width:2.3px"></div>
<div class="dd" style="left:731.6px;top:258.53999999999996px;width:11.6px;height:13.400000000000002px;"></div>
<div class="ar" style="left:735.0px;top:263.94px;border-left-width:2px;border-right-width:2px;border-top-width:2.5px"></div>
<div class="cb" style="left:688px;top:276.73999999999995px;width:56.0px;height:16.8px;"></div>
<div class="t rg" style="left:688px;top:280.73999999999995px;width:53.0px;text-align:center;font-size:7.6px;color:#3c3c3c;top:279.53999999999996px">0</div>
<div class="cb" style="left:747.5px;top:258.34px;width:57.0px;height:16.6px;border-right-width:2.3px"></div>
<div class="dd" style="left:790.6px;top:258.53999999999996px;width:11.6px;height:13.400000000000002px;"></div>
<div class="ar" style="left:794.0px;top:263.94px;border-left-width:2px;border-right-width:2px;border-top-width:2.5px"></div>
<div class="cb" style="left:747.5px;top:276.73999999999995px;width:55.5px;height:16.8px;"></div>
<div class="t rg" style="left:747.5px;top:280.73999999999995px;width:52.5px;text-align:center;font-size:7.6px;color:#3c3c3c;top:279.53999999999996px">0</div>
<div class="cb" style="left:805.3px;top:259.34px;width:55.700000000000045px;height:16.6px;border-right-width:2.3px"></div>
<div class="dd" style="left:847.1px;top:259.53999999999996px;width:11.6px;height:13.400000000000002px;"></div>
<div class="ar" style="left:850.5px;top:264.94px;border-left-width:2px;border-right-width:2px;border-top-width:2.5px"></div>
<div class="cb" style="left:805.3px;top:276.73999999999995px;width:55.700000000000045px;height:16.8px;"></div>
<div class="t rg" style="left:805.3px;top:280.73999999999995px;width:52.700000000000045px;text-align:center;font-size:7.6px;color:#3c3c3c;top:279.53999999999996px">0</div>
<div class="cb" style="left:861.8px;top:257.64px;width:156.2px;height:35.3px;"></div>
<div style="left:6px;top:294.72px;width:1014px;height:1.2px;background:#3e3a30"></div>
<div style="left:20px;top:295.92px;width:999px;height:36.8px;background:#e6dcb4"></div>
<div class="cb" style="left:20px;top:296.52000000000004px;width:58px;height:16.6px;border-right-width:2.3px"></div>
<div class="dd" style="left:64.10000000000001px;top:296.72px;width:11.6px;height:13.400000000000002px;"></div>
<div class="ar" style="left:67.5px;top:302.12000000000006px;border-left-width:2px;border-right-width:2px;border-top-width:2.5px"></div>
<div class="t rg" style="left:21.2px;top:299.42px;font-size:7.45px;color:#111;">Milling</div>
<div class="cb" style="left:20px;top:314.92px;width:56.5px;height:16.8px;"></div>
<div class="t rg" style="left:20px;top:318.92px;width:53.5px;text-align:center;font-size:7.6px;color:#3c3c3c;top:317.72px">2</div>
<div class="cb" style="left:78px;top:296.52000000000004px;width:57px;height:16.6px;border-right-width:2.3px"></div>
<div class="dd" style="left:121.1px;top:296.72px;width:11.6px;height:13.400000000000002px;"></div>
<div class="ar" style="left:124.49999999999999px;top:302.12000000000006px;border-left-width:2px;border-right-width:2px;border-top-width:2.5px"></div>
<div class="t rg" style="left:79.2px;top:299.42px;font-size:7.45px;color:#111;">Tapping</div>
<div class="cb" style="left:78px;top:314.92px;width:55.5px;height:16.8px;"></div>
<div class="t rg" style="left:78px;top:318.92px;width:52.5px;text-align:center;font-size:7.6px;color:#3c3c3c;top:317.72px">0.5</div>
<div class="cb" style="left:135px;top:296.52000000000004px;width:57.69999999999999px;height:16.6px;border-right-width:2.3px"></div>
<div class="dd" style="left:178.79999999999998px;top:296.72px;width:11.6px;height:13.400000000000002px;"></div>
<div class="ar" style="left:182.2px;top:302.12000000000006px;border-left-width:2px;border-right-width:2px;border-top-width:2.5px"></div>
<div class="t rg" style="left:136.2px;top:299.42px;font-size:7.45px;color:#111;">Grinding</div>
<div class="cb" style="left:135px;top:314.92px;width:56.19999999999999px;height:16.8px;"></div>
<div class="t rg" style="left:135px;top:318.92px;width:53.19999999999999px;text-align:center;font-size:7.6px;color:#3c3c3c;top:316.92px">8</div>
<div class="cb" style="left:194px;top:296.52000000000004px;width:60.900000000000006px;height:16.6px;border-right-width:2.3px"></div>
<div class="dd" style="left:241.0px;top:296.72px;width:11.6px;height:13.400000000000002px;"></div>
<div class="ar" style="left:244.4px;top:302.12000000000006px;border-left-width:2px;border-right-width:2px;border-top-width:2.5px"></div>
<div class="t rg" style="left:195.2px;top:299.42px;font-size:7.45px;color:#111;">Wire Cut</div>
<div class="cb" style="left:194px;top:314.92px;width:59.400000000000006px;height:16.8px;"></div>
<div class="t rg" style="left:194px;top:318.92px;width:56.400000000000006px;text-align:center;font-size:7.6px;color:#3c3c3c;top:317.72px">3.5</div>
<div class="cb" style="left:255px;top:296.52000000000004px;width:61.19999999999999px;height:16.6px;border-right-width:2.3px"></div>
<div class="dd" style="left:302.29999999999995px;top:296.72px;width:11.6px;height:13.400000000000002px;"></div>
<div class="ar" style="left:305.7px;top:302.12000000000006px;border-left-width:2px;border-right-width:2px;border-top-width:2.5px"></div>
<div class="cb" style="left:255px;top:314.92px;width:59.69999999999999px;height:16.8px;"></div>
<div class="t rg" style="left:255px;top:318.92px;width:56.69999999999999px;text-align:center;font-size:7.6px;color:#3c3c3c;top:317.72px">0</div>
<div class="cb" style="left:318px;top:296.52000000000004px;width:56.5px;height:16.6px;border-right-width:2.3px"></div>
<div class="dd" style="left:360.59999999999997px;top:296.72px;width:11.6px;height:13.400000000000002px;"></div>
<div class="ar" style="left:364.0px;top:302.12000000000006px;border-left-width:2px;border-right-width:2px;border-top-width:2.5px"></div>
<div class="cb" style="left:318px;top:314.92px;width:55.0px;height:16.8px;"></div>
<div class="t rg" style="left:318px;top:318.92px;width:52.0px;text-align:center;font-size:7.6px;color:#3c3c3c;top:317.72px">0</div>
<div class="cb" style="left:377.5px;top:296.52000000000004px;width:58.5px;height:16.6px;border-right-width:2.3px"></div>
<div class="dd" style="left:422.09999999999997px;top:296.72px;width:11.6px;height:13.400000000000002px;"></div>
<div class="ar" style="left:425.5px;top:302.12000000000006px;border-left-width:2px;border-right-width:2px;border-top-width:2.5px"></div>
<div class="cb" style="left:377.5px;top:314.92px;width:57.0px;height:16.8px;"></div>
<div class="t rg" style="left:377.5px;top:318.92px;width:54.0px;text-align:center;font-size:7.6px;color:#3c3c3c;top:317.72px">0</div>
<div class="cb" style="left:437.7px;top:296.52000000000004px;width:58.80000000000001px;height:16.6px;border-right-width:2.3px"></div>
<div class="dd" style="left:482.59999999999997px;top:296.72px;width:11.6px;height:13.400000000000002px;"></div>
<div class="ar" style="left:486.0px;top:302.12000000000006px;border-left-width:2px;border-right-width:2px;border-top-width:2.5px"></div>
<div class="cb" style="left:437.7px;top:314.92px;width:57.30000000000001px;height:16.8px;"></div>
<div class="t rg" style="left:437.7px;top:318.92px;width:54.30000000000001px;text-align:center;font-size:7.6px;color:#3c3c3c;top:317.72px">0</div>
<div class="cb" style="left:498.5px;top:297.82000000000005px;width:62.0px;height:16.6px;border-right-width:2.3px"></div>
<div class="dd" style="left:546.6px;top:298.02000000000004px;width:11.6px;height:13.400000000000002px;"></div>
<div class="ar" style="left:550.0px;top:303.4200000000001px;border-left-width:2px;border-right-width:2px;border-top-width:2.5px"></div>
<div class="cb" style="left:498.5px;top:314.92px;width:60.5px;height:16.8px;"></div>
<div class="t rg" style="left:498.5px;top:318.92px;width:57.5px;text-align:center;font-size:7.6px;color:#3c3c3c;top:317.72px">0</div>
<div class="cb" style="left:563px;top:297.82000000000005px;width:61.5px;height:16.6px;border-right-width:2.3px"></div>
<div class="dd" style="left:610.6px;top:298.02000000000004px;width:11.6px;height:13.400000000000002px;"></div>
<div class="ar" style="left:614.0px;top:303.4200000000001px;border-left-width:2px;border-right-width:2px;border-top-width:2.5px"></div>
<div class="cb" style="left:563px;top:314.92px;width:60.0px;height:16.8px;"></div>
<div class="t rg" style="left:563px;top:318.92px;width:57.0px;text-align:center;font-size:7.6px;color:#3c3c3c;top:317.72px">0</div>
<div class="cb" style="left:625.8px;top:296.52000000000004px;width:60.200000000000045px;height:16.6px;border-right-width:2.3px"></div>
<div class="dd" style="left:672.1px;top:296.72px;width:11.6px;height:13.400000000000002px;"></div>
<div class="ar" style="left:675.5px;top:302.12000000000006px;border-left-width:2px;border-right-width:2px;border-top-width:2.5px"></div>
<div class="cb" style="left:625.8px;top:314.92px;width:58.700000000000045px;height:16.8px;"></div>
<div class="t rg" style="left:625.8px;top:318.92px;width:55.700000000000045px;text-align:center;font-size:7.6px;color:#3c3c3c;top:317.72px">0</div>
<div class="cb" style="left:688px;top:296.52000000000004px;width:57.5px;height:16.6px;border-right-width:2.3px"></div>
<div class="dd" style="left:731.6px;top:296.72px;width:11.6px;height:13.400000000000002px;"></div>
<div class="ar" style="left:735.0px;top:302.12000000000006px;border-left-width:2px;border-right-width:2px;border-top-width:2.5px"></div>
<div class="cb" style="left:688px;top:314.92px;width:56.0px;height:16.8px;"></div>
<div class="t rg" style="left:688px;top:318.92px;width:53.0px;text-align:center;font-size:7.6px;color:#3c3c3c;top:317.72px">0</div>
<div class="cb" style="left:747.5px;top:296.52000000000004px;width:57.0px;height:16.6px;border-right-width:2.3px"></div>
<div class="dd" style="left:790.6px;top:296.72px;width:11.6px;height:13.400000000000002px;"></div>
<div class="ar" style="left:794.0px;top:302.12000000000006px;border-left-width:2px;border-right-width:2px;border-top-width:2.5px"></div>
<div class="cb" style="left:747.5px;top:314.92px;width:55.5px;height:16.8px;"></div>
<div class="t rg" style="left:747.5px;top:318.92px;width:52.5px;text-align:center;font-size:7.6px;color:#3c3c3c;top:317.72px">0</div>
<div class="cb" style="left:805.3px;top:297.52000000000004px;width:55.700000000000045px;height:16.6px;border-right-width:2.3px"></div>
<div class="dd" style="left:847.1px;top:297.72px;width:11.6px;height:13.400000000000002px;"></div>
<div class="ar" style="left:850.5px;top:303.12000000000006px;border-left-width:2px;border-right-width:2px;border-top-width:2.5px"></div>
<div class="cb" style="left:805.3px;top:314.92px;width:55.700000000000045px;height:16.8px;"></div>
<div class="t rg" style="left:805.3px;top:318.92px;width:52.700000000000045px;text-align:center;font-size:7.6px;color:#3c3c3c;top:317.72px">0</div>
<div class="cb" style="left:861.8px;top:295.82000000000005px;width:156.2px;height:35.3px;"></div>
<div style="left:6px;top:332.9px;width:1014px;height:1.2px;background:#3e3a30"></div>
<div style="left:20px;top:334.09999999999997px;width:999px;height:36.8px;background:#e6dcb4"></div>
<div class="cb" style="left:20px;top:334.7px;width:58px;height:16.6px;border-right-width:2.3px"></div>
<div class="dd" style="left:64.10000000000001px;top:334.9px;width:11.6px;height:13.400000000000002px;"></div>
<div class="ar" style="left:67.5px;top:340.3px;border-left-width:2px;border-right-width:2px;border-top-width:2.5px"></div>
<div class="t rg" style="left:21.2px;top:337.59999999999997px;font-size:7.45px;color:#111;">Grinding</div>
<div class="cb" style="left:20px;top:353.09999999999997px;width:56.5px;height:16.8px;"></div>
<div class="t rg" style="left:20px;top:357.09999999999997px;width:53.5px;text-align:center;font-size:7.6px;color:#3c3c3c;top:355.9px">2</div>
<div class="cb" style="left:78px;top:334.7px;width:57px;height:16.6px;border-right-width:2.3px"></div>
<div class="dd" style="left:121.1px;top:334.9px;width:11.6px;height:13.400000000000002px;"></div>
<div class="ar" style="left:124.49999999999999px;top:340.3px;border-left-width:2px;border-right-width:2px;border-top-width:2.5px"></div>
<div class="cb" style="left:78px;top:353.09999999999997px;width:55.5px;height:16.8px;"></div>
<div class="t rg" style="left:78px;top:357.09999999999997px;width:52.5px;text-align:center;font-size:7.6px;color:#3c3c3c;top:355.9px">0</div>
<div class="cb" style="left:135px;top:334.7px;width:57.69999999999999px;height:16.6px;border-right-width:2.3px"></div>
<div class="dd" style="left:178.79999999999998px;top:334.9px;width:11.6px;height:13.400000000000002px;"></div>
<div class="ar" style="left:182.2px;top:340.3px;border-left-width:2px;border-right-width:2px;border-top-width:2.5px"></div>
<div class="cb" style="left:135px;top:353.09999999999997px;width:56.19999999999999px;height:16.8px;"></div>
<div class="t rg" style="left:135px;top:357.09999999999997px;width:53.19999999999999px;text-align:center;font-size:7.6px;color:#3c3c3c;top:355.09999999999997px">0</div>
<div class="cb" style="left:194px;top:334.7px;width:60.900000000000006px;height:16.6px;border-right-width:2.3px"></div>
<div class="dd" style="left:241.0px;top:334.9px;width:11.6px;height:13.400000000000002px;"></div>
<div class="ar" style="left:244.4px;top:340.3px;border-left-width:2px;border-right-width:2px;border-top-width:2.5px"></div>
<div class="cb" style="left:194px;top:353.09999999999997px;width:59.400000000000006px;height:16.8px;"></div>
<div class="t rg" style="left:194px;top:357.09999999999997px;width:56.400000000000006px;text-align:center;font-size:7.6px;color:#3c3c3c;top:355.9px">0</div>
<div class="cb" style="left:255px;top:334.7px;width:61.19999999999999px;height:16.6px;border-right-width:2.3px"></div>
<div class="dd" style="left:302.29999999999995px;top:334.9px;width:11.6px;height:13.400000000000002px;"></div>
<div class="ar" style="left:305.7px;top:340.3px;border-left-width:2px;border-right-width:2px;border-top-width:2.5px"></div>
<div class="cb" style="left:255px;top:353.09999999999997px;width:59.69999999999999px;height:16.8px;"></div>
<div class="t rg" style="left:255px;top:357.09999999999997px;width:56.69999999999999px;text-align:center;font-size:7.6px;color:#3c3c3c;top:355.9px">0</div>
<div class="cb" style="left:318px;top:334.7px;width:56.5px;height:16.6px;border-right-width:2.3px"></div>
<div class="dd" style="left:360.59999999999997px;top:334.9px;width:11.6px;height:13.400000000000002px;"></div>
<div class="ar" style="left:364.0px;top:340.3px;border-left-width:2px;border-right-width:2px;border-top-width:2.5px"></div>
<div class="cb" style="left:318px;top:353.09999999999997px;width:55.0px;height:16.8px;"></div>
<div class="t rg" style="left:318px;top:357.09999999999997px;width:52.0px;text-align:center;font-size:7.6px;color:#3c3c3c;top:355.9px">0</div>
<div class="cb" style="left:377.5px;top:334.7px;width:58.5px;height:16.6px;border-right-width:2.3px"></div>
<div class="dd" style="left:422.09999999999997px;top:334.9px;width:11.6px;height:13.400000000000002px;"></div>
<div class="ar" style="left:425.5px;top:340.3px;border-left-width:2px;border-right-width:2px;border-top-width:2.5px"></div>
<div class="cb" style="left:377.5px;top:353.09999999999997px;width:57.0px;height:16.8px;"></div>
<div class="t rg" style="left:377.5px;top:357.09999999999997px;width:54.0px;text-align:center;font-size:7.6px;color:#3c3c3c;top:355.9px">0</div>
<div class="cb" style="left:437.7px;top:334.7px;width:58.80000000000001px;height:16.6px;border-right-width:2.3px"></div>
<div class="dd" style="left:482.59999999999997px;top:334.9px;width:11.6px;height:13.400000000000002px;"></div>
<div class="ar" style="left:486.0px;top:340.3px;border-left-width:2px;border-right-width:2px;border-top-width:2.5px"></div>
<div class="cb" style="left:437.7px;top:353.09999999999997px;width:57.30000000000001px;height:16.8px;"></div>
<div class="t rg" style="left:437.7px;top:357.09999999999997px;width:54.30000000000001px;text-align:center;font-size:7.6px;color:#3c3c3c;top:355.9px">0</div>
<div class="cb" style="left:498.5px;top:336.0px;width:62.0px;height:16.6px;border-right-width:2.3px"></div>
<div class="dd" style="left:546.6px;top:336.2px;width:11.6px;height:13.400000000000002px;"></div>
<div class="ar" style="left:550.0px;top:341.6px;border-left-width:2px;border-right-width:2px;border-top-width:2.5px"></div>
<div class="cb" style="left:498.5px;top:353.09999999999997px;width:60.5px;height:16.8px;"></div>
<div class="t rg" style="left:498.5px;top:357.09999999999997px;width:57.5px;text-align:center;font-size:7.6px;color:#3c3c3c;top:355.9px">0</div>
<div class="cb" style="left:563px;top:336.0px;width:61.5px;height:16.6px;border-right-width:2.3px"></div>
<div class="dd" style="left:610.6px;top:336.2px;width:11.6px;height:13.400000000000002px;"></div>
<div class="ar" style="left:614.0px;top:341.6px;border-left-width:2px;border-right-width:2px;border-top-width:2.5px"></div>
<div class="cb" style="left:563px;top:353.09999999999997px;width:60.0px;height:16.8px;"></div>
<div class="t rg" style="left:563px;top:357.09999999999997px;width:57.0px;text-align:center;font-size:7.6px;color:#3c3c3c;top:355.9px">0</div>
<div class="cb" style="left:625.8px;top:334.7px;width:60.200000000000045px;height:16.6px;border-right-width:2.3px"></div>
<div class="dd" style="left:672.1px;top:334.9px;width:11.6px;height:13.400000000000002px;"></div>
<div class="ar" style="left:675.5px;top:340.3px;border-left-width:2px;border-right-width:2px;border-top-width:2.5px"></div>
<div class="cb" style="left:625.8px;top:353.09999999999997px;width:58.700000000000045px;height:16.8px;"></div>
<div class="t rg" style="left:625.8px;top:357.09999999999997px;width:55.700000000000045px;text-align:center;font-size:7.6px;color:#3c3c3c;top:355.9px">0</div>
<div class="cb" style="left:688px;top:334.7px;width:57.5px;height:16.6px;border-right-width:2.3px"></div>
<div class="dd" style="left:731.6px;top:334.9px;width:11.6px;height:13.400000000000002px;"></div>
<div class="ar" style="left:735.0px;top:340.3px;border-left-width:2px;border-right-width:2px;border-top-width:2.5px"></div>
<div class="cb" style="left:688px;top:353.09999999999997px;width:56.0px;height:16.8px;"></div>
<div class="t rg" style="left:688px;top:357.09999999999997px;width:53.0px;text-align:center;font-size:7.6px;color:#3c3c3c;top:355.9px">0</div>
<div class="cb" style="left:747.5px;top:334.7px;width:57.0px;height:16.6px;border-right-width:2.3px"></div>
<div class="dd" style="left:790.6px;top:334.9px;width:11.6px;height:13.400000000000002px;"></div>
<div class="ar" style="left:794.0px;top:340.3px;border-left-width:2px;border-right-width:2px;border-top-width:2.5px"></div>
<div class="cb" style="left:747.5px;top:353.09999999999997px;width:55.5px;height:16.8px;"></div>
<div class="t rg" style="left:747.5px;top:357.09999999999997px;width:52.5px;text-align:center;font-size:7.6px;color:#3c3c3c;top:355.9px">0</div>
<div class="cb" style="left:805.3px;top:335.7px;width:55.700000000000045px;height:16.6px;border-right-width:2.3px"></div>
<div class="dd" style="left:847.1px;top:335.9px;width:11.6px;height:13.400000000000002px;"></div>
<div class="ar" style="left:850.5px;top:341.3px;border-left-width:2px;border-right-width:2px;border-top-width:2.5px"></div>
<div class="cb" style="left:805.3px;top:353.09999999999997px;width:55.700000000000045px;height:16.8px;"></div>
<div class="t rg" style="left:805.3px;top:357.09999999999997px;width:52.700000000000045px;text-align:center;font-size:7.6px;color:#3c3c3c;top:355.9px">0</div>
<div class="cb" style="left:861.8px;top:334.0px;width:156.2px;height:35.3px;"></div>
<div style="left:6px;top:371.08px;width:1014px;height:1.2px;background:#3e3a30"></div>
<div style="left:20px;top:372.28px;width:999px;height:36.8px;background:#e6dcb4"></div>
<div class="cb" style="left:20px;top:372.88px;width:58px;height:16.6px;border-right-width:2.3px"></div>
<div class="dd" style="left:64.10000000000001px;top:373.08px;width:11.6px;height:13.400000000000002px;"></div>
<div class="ar" style="left:67.5px;top:378.48px;border-left-width:2px;border-right-width:2px;border-top-width:2.5px"></div>
<div class="cb" style="left:20px;top:391.28px;width:56.5px;height:16.8px;"></div>
<div class="t rg" style="left:20px;top:395.28px;width:53.5px;text-align:center;font-size:7.6px;color:#3c3c3c;top:394.08px">0</div>
<div class="cb" style="left:78px;top:372.88px;width:57px;height:16.6px;border-right-width:2.3px"></div>
<div class="dd" style="left:121.1px;top:373.08px;width:11.6px;height:13.400000000000002px;"></div>
<div class="ar" style="left:124.49999999999999px;top:378.48px;border-left-width:2px;border-right-width:2px;border-top-width:2.5px"></div>
<div class="cb" style="left:78px;top:391.28px;width:55.5px;height:16.8px;"></div>
<div class="t rg" style="left:78px;top:395.28px;width:52.5px;text-align:center;font-size:7.6px;color:#3c3c3c;top:394.08px">0</div>
<div class="cb" style="left:135px;top:372.88px;width:57.69999999999999px;height:16.6px;border-right-width:2.3px"></div>
<div class="dd" style="left:178.79999999999998px;top:373.08px;width:11.6px;height:13.400000000000002px;"></div>
<div class="ar" style="left:182.2px;top:378.48px;border-left-width:2px;border-right-width:2px;border-top-width:2.5px"></div>
<div class="cb" style="left:135px;top:391.28px;width:56.19999999999999px;height:16.8px;"></div>
<div class="t rg" style="left:135px;top:395.28px;width:53.19999999999999px;text-align:center;font-size:7.6px;color:#3c3c3c;top:393.28px">0</div>
<div class="cb" style="left:194px;top:372.88px;width:60.900000000000006px;height:16.6px;border-right-width:2.3px"></div>
<div class="dd" style="left:241.0px;top:373.08px;width:11.6px;height:13.400000000000002px;"></div>
<div class="ar" style="left:244.4px;top:378.48px;border-left-width:2px;border-right-width:2px;border-top-width:2.5px"></div>
<div class="cb" style="left:194px;top:391.28px;width:59.400000000000006px;height:16.8px;"></div>
<div class="t rg" style="left:194px;top:395.28px;width:56.400000000000006px;text-align:center;font-size:7.6px;color:#3c3c3c;top:394.08px">0</div>
<div class="cb" style="left:255px;top:372.88px;width:61.19999999999999px;height:16.6px;border-right-width:2.3px"></div>
<div class="dd" style="left:302.29999999999995px;top:373.08px;width:11.6px;height:13.400000000000002px;"></div>
<div class="ar" style="left:305.7px;top:378.48px;border-left-width:2px;border-right-width:2px;border-top-width:2.5px"></div>
<div class="cb" style="left:255px;top:391.28px;width:59.69999999999999px;height:16.8px;"></div>
<div class="t rg" style="left:255px;top:395.28px;width:56.69999999999999px;text-align:center;font-size:7.6px;color:#3c3c3c;top:394.08px">0</div>
<div class="cb" style="left:318px;top:372.88px;width:56.5px;height:16.6px;border-right-width:2.3px"></div>
<div class="dd" style="left:360.59999999999997px;top:373.08px;width:11.6px;height:13.400000000000002px;"></div>
<div class="ar" style="left:364.0px;top:378.48px;border-left-width:2px;border-right-width:2px;border-top-width:2.5px"></div>
<div class="cb" style="left:318px;top:391.28px;width:55.0px;height:16.8px;"></div>
<div class="t rg" style="left:318px;top:395.28px;width:52.0px;text-align:center;font-size:7.6px;color:#3c3c3c;top:394.08px">0</div>
<div class="cb" style="left:377.5px;top:372.88px;width:58.5px;height:16.6px;border-right-width:2.3px"></div>
<div class="dd" style="left:422.09999999999997px;top:373.08px;width:11.6px;height:13.400000000000002px;"></div>
<div class="ar" style="left:425.5px;top:378.48px;border-left-width:2px;border-right-width:2px;border-top-width:2.5px"></div>
<div class="cb" style="left:377.5px;top:391.28px;width:57.0px;height:16.8px;"></div>
<div class="t rg" style="left:377.5px;top:395.28px;width:54.0px;text-align:center;font-size:7.6px;color:#3c3c3c;top:394.08px">0</div>
<div class="cb" style="left:437.7px;top:372.88px;width:58.80000000000001px;height:16.6px;border-right-width:2.3px"></div>
<div class="dd" style="left:482.59999999999997px;top:373.08px;width:11.6px;height:13.400000000000002px;"></div>
<div class="ar" style="left:486.0px;top:378.48px;border-left-width:2px;border-right-width:2px;border-top-width:2.5px"></div>
<div class="cb" style="left:437.7px;top:391.28px;width:57.30000000000001px;height:16.8px;"></div>
<div class="t rg" style="left:437.7px;top:395.28px;width:54.30000000000001px;text-align:center;font-size:7.6px;color:#3c3c3c;top:394.08px">0</div>
<div class="cb" style="left:498.5px;top:374.18px;width:62.0px;height:16.6px;border-right-width:2.3px"></div>
<div class="dd" style="left:546.6px;top:374.38px;width:11.6px;height:13.400000000000002px;"></div>
<div class="ar" style="left:550.0px;top:379.78000000000003px;border-left-width:2px;border-right-width:2px;border-top-width:2.5px"></div>
<div class="cb" style="left:498.5px;top:391.28px;width:60.5px;height:16.8px;"></div>
<div class="t rg" style="left:498.5px;top:395.28px;width:57.5px;text-align:center;font-size:7.6px;color:#3c3c3c;top:394.08px">0</div>
<div class="cb" style="left:563px;top:374.18px;width:61.5px;height:16.6px;border-right-width:2.3px"></div>
<div class="dd" style="left:610.6px;top:374.38px;width:11.6px;height:13.400000000000002px;"></div>
<div class="ar" style="left:614.0px;top:379.78000000000003px;border-left-width:2px;border-right-width:2px;border-top-width:2.5px"></div>
<div class="cb" style="left:563px;top:391.28px;width:60.0px;height:16.8px;"></div>
<div class="t rg" style="left:563px;top:395.28px;width:57.0px;text-align:center;font-size:7.6px;color:#3c3c3c;top:394.08px">0</div>
<div class="cb" style="left:625.8px;top:372.88px;width:60.200000000000045px;height:16.6px;border-right-width:2.3px"></div>
<div class="dd" style="left:672.1px;top:373.08px;width:11.6px;height:13.400000000000002px;"></div>
<div class="ar" style="left:675.5px;top:378.48px;border-left-width:2px;border-right-width:2px;border-top-width:2.5px"></div>
<div class="cb" style="left:625.8px;top:391.28px;width:58.700000000000045px;height:16.8px;"></div>
<div class="t rg" style="left:625.8px;top:395.28px;width:55.700000000000045px;text-align:center;font-size:7.6px;color:#3c3c3c;top:394.08px">0</div>
<div class="cb" style="left:688px;top:372.88px;width:57.5px;height:16.6px;border-right-width:2.3px"></div>
<div class="dd" style="left:731.6px;top:373.08px;width:11.6px;height:13.400000000000002px;"></div>
<div class="ar" style="left:735.0px;top:378.48px;border-left-width:2px;border-right-width:2px;border-top-width:2.5px"></div>
<div class="cb" style="left:688px;top:391.28px;width:56.0px;height:16.8px;"></div>
<div class="t rg" style="left:688px;top:395.28px;width:53.0px;text-align:center;font-size:7.6px;color:#3c3c3c;top:394.08px">0</div>
<div class="cb" style="left:747.5px;top:372.88px;width:57.0px;height:16.6px;border-right-width:2.3px"></div>
<div class="dd" style="left:790.6px;top:373.08px;width:11.6px;height:13.400000000000002px;"></div>
<div class="ar" style="left:794.0px;top:378.48px;border-left-width:2px;border-right-width:2px;border-top-width:2.5px"></div>
<div class="cb" style="left:747.5px;top:391.28px;width:55.5px;height:16.8px;"></div>
<div class="t rg" style="left:747.5px;top:395.28px;width:52.5px;text-align:center;font-size:7.6px;color:#3c3c3c;top:394.08px">0</div>
<div class="cb" style="left:805.3px;top:373.88px;width:55.700000000000045px;height:16.6px;border-right-width:2.3px"></div>
<div class="dd" style="left:847.1px;top:374.08px;width:11.6px;height:13.400000000000002px;"></div>
<div class="ar" style="left:850.5px;top:379.48px;border-left-width:2px;border-right-width:2px;border-top-width:2.5px"></div>
<div class="cb" style="left:805.3px;top:391.28px;width:55.700000000000045px;height:16.8px;"></div>
<div class="t rg" style="left:805.3px;top:395.28px;width:52.700000000000045px;text-align:center;font-size:7.6px;color:#3c3c3c;top:394.08px">0</div>
<div class="cb" style="left:861.8px;top:372.18px;width:156.2px;height:35.3px;"></div>
<div style="left:6px;top:409.26px;width:1014px;height:1.2px;background:#3a3a3a"></div>
<div style="left:18.6px;top:142.0px;width:1.2px;height:268.26px;background:#404040"></div>
<svg style="position:absolute;left:10px;top:144px" width="7" height="8"><path d="M1 0.5 L5.5 4 L1 7.5Z" fill="#000"/></svg>
<svg style="position:absolute;left:9.5px;top:373px" width="8" height="8"><path d="M4 0.5 V7.5 M0.8 2.2 L7.2 5.8 M7.2 2.2 L0.8 5.8" stroke="#000" stroke-width="0.9"/></svg>
<div style="left:6px;top:561px;width:1014px;height:1.2px;background:#4a4844"></div>
<div style="left:1019.4px;top:71.8px;width:10.9px;height:501.5px;background:#d7d5ce;border-left:1.3px solid #f4f2ee"></div>
<div class="btn" style="left:1019.7px;top:71.8px;width:10.6px;height:11px;"></div>
<svg style="position:absolute;left:1020px;top:75px" width="10" height="6"><path d="M2.5 4.2 L5.2 1.5 L7.9 4.2Z" fill="#000"/></svg>
<div class="btn" style="left:1019.7px;top:573.3px;width:10.6px;height:13px;"></div>
<svg style="position:absolute;left:1020px;top:577px" width="10" height="6"><path d="M2.5 1.5 L5.2 4.2 L7.9 1.5Z" fill="#000"/></svg>
<div style="left:1019.7px;top:586.3px;width:10.6px;height:12px;background:#D6D3CD"></div>
<div style="left:1029.9px;top:71.5px;width:1.4px;height:515px;background:#5c5c5c"></div>
<div style="left:1019px;top:71.4px;width:12.3px;height:1.1px;background:#505050"></div>
<div class="t" style="left:9.4px;top:590.1px;font-size:7.5px;color:#111">Record:</div>
<div class="btn" style="left:41.5px;top:587px;width:13px;height:10.7px;"></div>
<div class="btn" style="left:55.4px;top:587px;width:14px;height:10.7px;"></div>
<div class="btn" style="left:125px;top:587px;width:10.2px;height:10.7px;"></div>
<div class="btn" style="left:135.8px;top:587px;width:14.4px;height:10.7px;"></div>
<div class="btn" style="left:150.8px;top:587px;width:13.2px;height:10.7px;"></div>
<svg style="position:absolute;left:41.5px;top:587px" width="13" height="11"><path d="M3.5 2.5 V8.5" stroke="#000" stroke-width="1.3"/><path d="M9 2.5 L5 5.5 L9 8.5Z" fill="#000"/></svg>
<svg style="position:absolute;left:55.4px;top:587px" width="14" height="11"><path d="M8.5 2.5 L5 5.5 L8.5 8.5Z" fill="#000"/></svg>
<svg style="position:absolute;left:125px;top:587px" width="10" height="11"><path d="M3.5 2.5 L7 5.5 L3.5 8.5Z" fill="#000"/></svg>
<svg style="position:absolute;left:135.8px;top:587px" width="14" height="11"><path d="M4 2.5 L8 5.5 L4 8.5Z" fill="#000"/><path d="M9.5 2.5 V8.5" stroke="#000" stroke-width="1.3"/></svg>
<svg style="position:absolute;left:150.8px;top:587px" width="13" height="11"><path d="M2 2.5 L5.5 5.5 L2 8.5Z" fill="#000"/><path d="M9 3 V8 M6.5 5.5 H11.5 M7.3 3.8 L10.7 7.2 M10.7 3.8 L7.3 7.2" stroke="#000" stroke-width="1"/></svg>
<div style="left:73.2px;top:586.9px;width:45.5px;height:11.3px;background:#fff;border-top:1px solid #404040;border-left:1px solid #404040"></div>
<div class="t" style="left:112px;top:590px;font-size:7.5px;color:#111">4</div>
<div class="t" style="left:169px;top:590px;font-size:7.5px;color:#111">of&nbsp;&nbsp;9</div>
<div class="btn" style="left:272.1px;top:586.1px;width:11.5px;height:11.6px;"></div>
<svg style="position:absolute;left:272px;top:586px" width="12" height="12"><path d="M7 3 L4 6 L7 9Z" fill="#000"/></svg>
<div style="left:283.6px;top:586.1px;width:198.5px;height:11.6px;background:#eceae6"></div>
<div class="btn" style="left:482px;top:586.1px;width:524.4px;height:11.6px;"></div>
<div class="btn" style="left:1006.4px;top:586.1px;width:13.2px;height:11.6px;"></div>
<svg style="position:absolute;left:1006.4px;top:586.1px" width="13" height="12"><path d="M5.5 3 L8.5 6 L5.5 9Z" fill="#000"/></svg>
<div style="left:91.9px;top:580.6px;width:31.4px;height:18.2px;border:2px solid #d01818"></div>
<div style="left:165.2px;top:578.5px;width:30.1px;height:22.8px;border:2px solid #d01818"></div>
<svg style="position:absolute;left:860px;top:515px" width="140" height="40"><path d="M12 20 H131.5 M113.5 11.5 L131.5 20 L117.5 29" stroke="#d81010" stroke-width="1.8" fill="none"/></svg>
</body></html>
